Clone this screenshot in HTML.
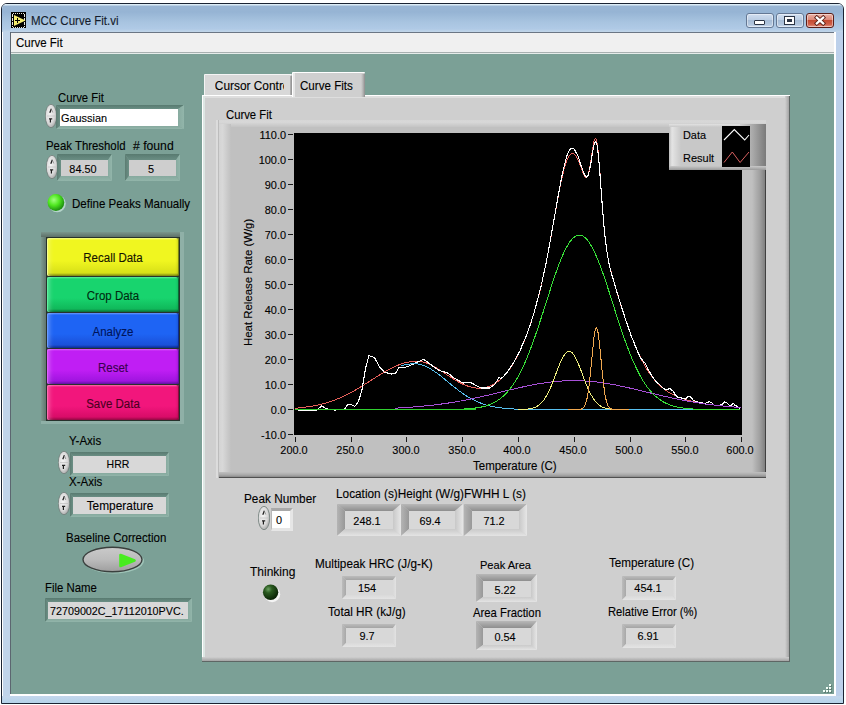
<!DOCTYPE html>
<html><head><meta charset="utf-8"><title>MCC Curve Fit.vi</title>
<style>
html,body{margin:0;padding:0;}
body{width:846px;height:705px;position:relative;overflow:hidden;background:#ffffff;font-family:"Liberation Sans", sans-serif;}
.r{position:absolute;}
.t{position:absolute;white-space:nowrap;font-family:"Liberation Sans", sans-serif;-webkit-text-stroke:0.12px currentColor;}
</style></head><body>
<div class="r" style="left:1px;top:3px;width:843px;height:701px;background:#bcd2ea;border:1px solid #1b2433;border-radius:6px 6px 0 0;box-sizing:border-box;"></div>
<div class="r" style="left:2px;top:4px;width:841px;height:699px;border-radius:5px 5px 0 0;box-shadow:inset 1px 1px 0 rgba(255,255,255,.85);"></div>
<div class="r" style="left:2px;top:4px;width:841px;height:28px;background:linear-gradient(#dcecf6 0,#dcecf6 1px,#9ab6d4 2px,#96b4d4 8px,#a8c4e0 18px,#b0cae6 25px,#c2d6e8 28px);border-radius:5px 5px 0 0;"></div>
<div class="r" style="left:2px;top:32px;width:8px;height:671px;background:#c0d4ea;border-left:1px solid #fff;box-sizing:border-box;"></div>
<div class="r" style="left:836px;top:32px;width:7px;height:671px;background:#bcd0ea;"></div>
<div class="r" style="left:2px;top:696px;width:841px;height:7px;background:linear-gradient(#c4d6ec,#b4d4ea);"></div>
<div class="r" style="left:10px;top:32px;width:825px;height:1px;background:#6b7684;"></div>
<div class="r" style="left:10px;top:32px;width:1px;height:662px;background:#5c6670;"></div>
<div class="r" style="left:834px;top:32px;width:2px;height:664px;background:#ffffff;"></div>
<div class="r" style="left:10px;top:694px;width:826px;height:2px;background:#ffffff;"></div>
<svg class="r" style="left:11px;top:12px" width="15" height="16" viewBox="0 0 15 16" shape-rendering="crispEdges">
<rect x="0" y="0" width="15" height="16" fill="#000"/>
<path d="M2 1h11M2 15h11" stroke="#e8e8e0" stroke-width="1" stroke-dasharray="1 1" fill="none"/>
<path d="M1.5 1.5v13M13.5 1.5v13" stroke="#e8e8e0" stroke-width="1" stroke-dasharray="3 1" fill="none"/>
<polygon points="3,3 14.5,8.5 3,14" fill="#f4ec70" shape-rendering="auto"/>
<path d="M4 8.5h5M6.5 6v5" stroke="#000" stroke-width="1"/>
</svg>
<div class="t" style="left:31.1px;top:14.58px;font-size:12.31px;line-height:12.31px;color:#141c2c;transform:scaleX(0.9346);transform-origin:0 0;">MCC Curve Fit.vi</div>
<div class="r" style="left:746px;top:13px;width:28px;height:15px;background:linear-gradient(#d0def0 0%,#bccee4 45%,#a6bcd6 50%,#b2c6de 80%,#c8d8ec 100%);border:1px solid #647894;border-radius:3px;box-sizing:border-box;box-shadow:inset 0 0 0 1px rgba(255,255,255,.45);"></div>
<div class="r" style="left:776px;top:13px;width:28px;height:15px;background:linear-gradient(#d0def0 0%,#bccee4 45%,#a6bcd6 50%,#b2c6de 80%,#c8d8ec 100%);border:1px solid #647894;border-radius:3px;box-sizing:border-box;box-shadow:inset 0 0 0 1px rgba(255,255,255,.45);"></div>
<div class="r" style="left:806px;top:13px;width:28px;height:15px;background:linear-gradient(#eab0a4 0%,#dc8878 45%,#c44a32 50%,#d0604a 80%,#e4988a 100%);border:1px solid #5a1d18;border-radius:3px;box-sizing:border-box;box-shadow:inset 0 0 0 1px rgba(255,255,255,.45);"></div>
<div class="r" style="left:754px;top:20px;width:11px;height:5px;background:#fff;border:1px solid #2b3444;box-sizing:border-box;border-radius:1px;"></div>
<div class="r" style="left:784px;top:16px;width:11px;height:9px;background:#fff;border:1px solid #2b3444;box-sizing:border-box;"></div>
<div class="r" style="left:787px;top:19px;width:5px;height:3px;background:#2b3444;"></div>
<svg class="r" style="left:814px;top:15px" width="12" height="11" viewBox="0 0 12 11">
<path d="M2.8 2.6L9.2 8.4M9.2 2.6L2.8 8.4" stroke="#5a2018" stroke-width="4" stroke-linecap="square"/>
<path d="M2.8 2.6L9.2 8.4M9.2 2.6L2.8 8.4" stroke="#ffffff" stroke-width="2.2" stroke-linecap="square"/>
</svg>
<div class="r" style="left:11px;top:33px;width:823px;height:19px;background:#f0f0f0;"></div>
<div class="r" style="left:11px;top:52px;width:823px;height:1px;background:#a8b0b0;"></div>
<div class="r" style="left:11px;top:53px;width:823px;height:1px;background:#e6ecea;"></div>
<div class="t" style="left:16.1px;top:36.58px;font-size:12.31px;line-height:12.31px;color:#000;transform:scaleX(0.9346);transform-origin:0 0;">Curve Fit</div>
<div class="r" style="left:11px;top:54px;width:823px;height:640px;background:#7ba096;"></div>
<div class="r" style="left:830px;top:685px;width:2px;height:2px;background:#5f7f76;"></div>
<div class="r" style="left:829px;top:684px;width:2px;height:2px;background:#f4fff8;"></div>
<div class="r" style="left:827px;top:688px;width:2px;height:2px;background:#5f7f76;"></div>
<div class="r" style="left:826px;top:687px;width:2px;height:2px;background:#f4fff8;"></div>
<div class="r" style="left:830px;top:688px;width:2px;height:2px;background:#5f7f76;"></div>
<div class="r" style="left:829px;top:687px;width:2px;height:2px;background:#f4fff8;"></div>
<div class="r" style="left:824px;top:691px;width:2px;height:2px;background:#5f7f76;"></div>
<div class="r" style="left:823px;top:690px;width:2px;height:2px;background:#f4fff8;"></div>
<div class="r" style="left:827px;top:691px;width:2px;height:2px;background:#5f7f76;"></div>
<div class="r" style="left:826px;top:690px;width:2px;height:2px;background:#f4fff8;"></div>
<div class="r" style="left:830px;top:691px;width:2px;height:2px;background:#5f7f76;"></div>
<div class="r" style="left:829px;top:690px;width:2px;height:2px;background:#f4fff8;"></div>
<div class="t" style="left:57.6px;top:91.96px;font-size:12.09px;line-height:12.09px;color:#000;transform:scaleX(0.9346);transform-origin:0 0;">Curve Fit</div>
<svg class="r" style="left:45px;top:104px" width="12" height="24" viewBox="0 0 12 24">
<defs><radialGradient id="ag45104" cx="40%" cy="40%" r="70%"><stop offset="0" stop-color="#f4f4f4"/><stop offset=".6" stop-color="#d8d8d8"/><stop offset="1" stop-color="#9a9a9a"/></radialGradient></defs>
<ellipse cx="6.0" cy="12.0" rx="5.7" ry="11.7" fill="url(#ag45104)" stroke="#6e7c78" stroke-width=".8"/>
<line x1="2" y1="12.0" x2="10" y2="12.0" stroke="#b8b8b8" stroke-width=".6"/>
<path d="M4.8 8.8 L6.4 4.8" stroke="#202020" stroke-width="1.3" fill="none"/>
<path d="M6.6 5.5 L7.8 8.5" stroke="#9a9a9a" stroke-width="1" fill="none"/>
<path d="M4.0 14.8 h3.2 M5.4 14.8 v3.6" stroke="#202020" stroke-width="1.2" fill="none"/>
</svg>
<svg class="r" style="left:56px;top:105px" width="128" height="24" viewBox="0 0 128 24">
<defs><linearGradient id="bt1" x1="0" y1="0" x2="0" y2="1"><stop offset="0" stop-color="#587a70"/><stop offset="1" stop-color="#6a8e84"/></linearGradient>
<linearGradient id="bl1" x1="0" y1="0" x2="1" y2="0"><stop offset="0" stop-color="#5c7c72"/><stop offset="1" stop-color="#6c9086"/></linearGradient>
<linearGradient id="br1" x1="0" y1="0" x2="1" y2="0"><stop offset="0" stop-color="#88aba0"/><stop offset="1" stop-color="#92b5aa"/></linearGradient>
<linearGradient id="bb1" x1="0" y1="0" x2="0" y2="1"><stop offset="0" stop-color="#86a99e"/><stop offset="1" stop-color="#92b5aa"/></linearGradient></defs>
<rect x="4" y="4" width="118" height="17" fill="#ffffff"/>
<polygon points="0,0 128,0 122,4 4,4" fill="url(#bt1)"/>
<polygon points="0,0 4,4 4,21 0,24" fill="url(#bl1)"/>
<polygon points="128,0 128,24 122,21 122,4" fill="url(#br1)"/>
<polygon points="0,24 128,24 122,21 4,21" fill="url(#bb1)"/>
</svg>
<div class="t" style="left:61.1px;top:112.23px;font-size:11.66px;line-height:11.66px;color:#000;transform:scaleX(0.9346);transform-origin:0 0;">Gaussian</div>
<div class="t" style="left:46.1px;top:139.67px;font-size:12.20px;line-height:12.20px;color:#000;transform:scaleX(0.9346);transform-origin:0 0;">Peak Threshold</div>
<div class="t" style="left:132.6px;top:138.95px;font-size:13.05px;line-height:13.05px;color:#000;transform:scaleX(0.9346);transform-origin:0 0;"># found</div>
<svg class="r" style="left:46px;top:155px" width="12" height="24" viewBox="0 0 12 24">
<defs><radialGradient id="ag46155" cx="40%" cy="40%" r="70%"><stop offset="0" stop-color="#f4f4f4"/><stop offset=".6" stop-color="#d8d8d8"/><stop offset="1" stop-color="#9a9a9a"/></radialGradient></defs>
<ellipse cx="6.0" cy="12.0" rx="5.7" ry="11.7" fill="url(#ag46155)" stroke="#6e7c78" stroke-width=".8"/>
<line x1="2" y1="12.0" x2="10" y2="12.0" stroke="#b8b8b8" stroke-width=".6"/>
<path d="M4.8 8.8 L6.4 4.8" stroke="#202020" stroke-width="1.3" fill="none"/>
<path d="M6.6 5.5 L7.8 8.5" stroke="#9a9a9a" stroke-width="1" fill="none"/>
<path d="M4.0 14.8 h3.2 M5.4 14.8 v3.6" stroke="#202020" stroke-width="1.2" fill="none"/>
</svg>
<svg class="r" style="left:57px;top:154px" width="55" height="27" viewBox="0 0 55 27">
<defs><linearGradient id="bt2" x1="0" y1="0" x2="0" y2="1"><stop offset="0" stop-color="#587a70"/><stop offset="1" stop-color="#6a8e84"/></linearGradient>
<linearGradient id="bl2" x1="0" y1="0" x2="1" y2="0"><stop offset="0" stop-color="#5c7c72"/><stop offset="1" stop-color="#6c9086"/></linearGradient>
<linearGradient id="br2" x1="0" y1="0" x2="1" y2="0"><stop offset="0" stop-color="#88aba0"/><stop offset="1" stop-color="#92b5aa"/></linearGradient>
<linearGradient id="bb2" x1="0" y1="0" x2="0" y2="1"><stop offset="0" stop-color="#86a99e"/><stop offset="1" stop-color="#92b5aa"/></linearGradient></defs>
<rect x="4" y="6" width="47" height="16" fill="#cecece"/>
<polygon points="0,0 55,0 51,6 4,6" fill="url(#bt2)"/>
<polygon points="0,0 4,6 4,22 0,27" fill="url(#bl2)"/>
<polygon points="55,0 55,27 51,22 51,6" fill="url(#br2)"/>
<polygon points="0,27 55,27 51,22 4,22" fill="url(#bb2)"/>
</svg>
<div class="t" style="left:-17.2px;width:200px;text-align:center;top:163.23px;font-size:11.66px;line-height:11.66px;color:#000;transform:scaleX(0.9346);transform-origin:50% 0;">84.50</div>
<svg class="r" style="left:125px;top:154px" width="55" height="27" viewBox="0 0 55 27">
<defs><linearGradient id="bt3" x1="0" y1="0" x2="0" y2="1"><stop offset="0" stop-color="#587a70"/><stop offset="1" stop-color="#6a8e84"/></linearGradient>
<linearGradient id="bl3" x1="0" y1="0" x2="1" y2="0"><stop offset="0" stop-color="#5c7c72"/><stop offset="1" stop-color="#6c9086"/></linearGradient>
<linearGradient id="br3" x1="0" y1="0" x2="1" y2="0"><stop offset="0" stop-color="#88aba0"/><stop offset="1" stop-color="#92b5aa"/></linearGradient>
<linearGradient id="bb3" x1="0" y1="0" x2="0" y2="1"><stop offset="0" stop-color="#86a99e"/><stop offset="1" stop-color="#92b5aa"/></linearGradient></defs>
<rect x="4" y="6" width="47" height="16" fill="#cecece"/>
<polygon points="0,0 55,0 51,6 4,6" fill="url(#bt3)"/>
<polygon points="0,0 4,6 4,22 0,27" fill="url(#bl3)"/>
<polygon points="55,0 55,27 51,22 51,6" fill="url(#br3)"/>
<polygon points="0,27 55,27 51,22 4,22" fill="url(#bb3)"/>
</svg>
<div class="t" style="left:51.3px;width:200px;text-align:center;top:163.23px;font-size:11.66px;line-height:11.66px;color:#000;transform:scaleX(0.9346);transform-origin:50% 0;">5</div>
<svg class="r" style="left:45px;top:191px" width="24" height="24" viewBox="0 0 24 24">
<defs><radialGradient id="led1" cx="38%" cy="35%" r="65%"><stop offset="0" stop-color="#a0ff80"/><stop offset=".5" stop-color="#50e820"/><stop offset="1" stop-color="#1e9010"/></radialGradient></defs>
<circle cx="12.2" cy="12.6" r="8.6" fill="#b4d4ca"/>
<circle cx="10.9" cy="11.5" r="8.4" fill="url(#led1)"/>
</svg>
<div class="t" style="left:72.0px;top:198.04px;font-size:12.36px;line-height:12.36px;color:#000;transform:scaleX(0.9346);transform-origin:0 0;">Define Peaks Manually</div>
<div class="r" style="left:41px;top:232px;width:143px;height:192px;background:#8fb0a7;"></div>
<div class="r" style="left:41px;top:232px;width:139px;height:5px;background:linear-gradient(#7a968c,#5e7068);"></div>
<div class="r" style="left:41px;top:237px;width:5px;height:184px;background:linear-gradient(to right,#7c9a90,#62766e);"></div>
<div class="r" style="left:46px;top:237px;width:134px;height:184px;background:#27322c;"></div>
<div class="r" style="left:47px;top:238px;width:132px;height:38px;background:linear-gradient(#f8ff90 0,#f0f620 2px,#f0f620 60%,#d8e018 calc(100% - 3px),#7a8410 100%);border-radius:2px;box-shadow:inset 1px 0 0 #f8ff90, inset 6px 0 5px -4px rgba(255,255,255,.35), inset -1px 0 0 #7a8410, inset -3px 0 3px -2px rgba(0,0,0,.25);"></div>
<div class="t" style="left:13.0px;width:200px;text-align:center;top:252.48px;font-size:12.31px;line-height:12.31px;color:#141400;transform:scaleX(0.9346);transform-origin:50% 0;">Recall Data</div>
<div class="r" style="left:47px;top:277px;width:132px;height:35px;background:linear-gradient(#60f0a0 0,#18d46e 2px,#18d46e 60%,#10b85a calc(100% - 3px),#0a6a34 100%);border-radius:2px;box-shadow:inset 1px 0 0 #60f0a0, inset 6px 0 5px -4px rgba(255,255,255,.35), inset -1px 0 0 #0a6a34, inset -3px 0 3px -2px rgba(0,0,0,.25);"></div>
<div class="t" style="left:13.0px;width:200px;text-align:center;top:289.98px;font-size:12.31px;line-height:12.31px;color:#002a10;transform:scaleX(0.9346);transform-origin:50% 0;">Crop Data</div>
<div class="r" style="left:47px;top:313px;width:132px;height:35px;background:linear-gradient(#6a9cff 0,#1e64f4 2px,#1e64f4 60%,#1a50d8 calc(100% - 3px),#0c2a90 100%);border-radius:2px;box-shadow:inset 1px 0 0 #6a9cff, inset 6px 0 5px -4px rgba(255,255,255,.35), inset -1px 0 0 #0c2a90, inset -3px 0 3px -2px rgba(0,0,0,.25);"></div>
<div class="t" style="left:13.0px;width:200px;text-align:center;top:325.98px;font-size:12.31px;line-height:12.31px;color:#00145a;transform:scaleX(0.9346);transform-origin:50% 0;">Analyze</div>
<div class="r" style="left:47px;top:349px;width:132px;height:35px;background:linear-gradient(#e060ff 0,#c01ef4 2px,#c01ef4 60%,#a014e0 calc(100% - 3px),#6010a0 100%);border-radius:2px;box-shadow:inset 1px 0 0 #e060ff, inset 6px 0 5px -4px rgba(255,255,255,.35), inset -1px 0 0 #6010a0, inset -3px 0 3px -2px rgba(0,0,0,.25);"></div>
<div class="t" style="left:13.0px;width:200px;text-align:center;top:361.98px;font-size:12.31px;line-height:12.31px;color:#3a0050;transform:scaleX(0.9346);transform-origin:50% 0;">Reset</div>
<div class="r" style="left:47px;top:385px;width:132px;height:35px;background:linear-gradient(#ff6cb0 0,#f2167c 2px,#f2167c 60%,#d80c68 calc(100% - 3px),#900840 100%);border-radius:2px;box-shadow:inset 1px 0 0 #ff6cb0, inset 6px 0 5px -4px rgba(255,255,255,.35), inset -1px 0 0 #900840, inset -3px 0 3px -2px rgba(0,0,0,.25);"></div>
<div class="t" style="left:13.0px;width:200px;text-align:center;top:397.98px;font-size:12.31px;line-height:12.31px;color:#4a0020;transform:scaleX(0.9346);transform-origin:50% 0;">Save Data</div>
<div class="t" style="left:68.6px;top:435.08px;font-size:12.31px;line-height:12.31px;color:#000;transform:scaleX(0.9346);transform-origin:0 0;">Y-Axis</div>
<svg class="r" style="left:58px;top:451px" width="12" height="23" viewBox="0 0 12 23">
<defs><radialGradient id="ag58451" cx="40%" cy="40%" r="70%"><stop offset="0" stop-color="#f4f4f4"/><stop offset=".6" stop-color="#d8d8d8"/><stop offset="1" stop-color="#9a9a9a"/></radialGradient></defs>
<ellipse cx="6.0" cy="11.5" rx="5.7" ry="11.2" fill="url(#ag58451)" stroke="#6e7c78" stroke-width=".8"/>
<line x1="2" y1="11.5" x2="10" y2="11.5" stroke="#b8b8b8" stroke-width=".6"/>
<path d="M4.8 8.3 L6.4 4.3" stroke="#202020" stroke-width="1.3" fill="none"/>
<path d="M6.6 5.0 L7.8 8.0" stroke="#9a9a9a" stroke-width="1" fill="none"/>
<path d="M4.0 14.3 h3.2 M5.4 14.3 v3.6" stroke="#202020" stroke-width="1.2" fill="none"/>
</svg>
<svg class="r" style="left:70px;top:452px" width="99" height="24" viewBox="0 0 99 24">
<defs><linearGradient id="bt4" x1="0" y1="0" x2="0" y2="1"><stop offset="0" stop-color="#587a70"/><stop offset="1" stop-color="#6a8e84"/></linearGradient>
<linearGradient id="bl4" x1="0" y1="0" x2="1" y2="0"><stop offset="0" stop-color="#5c7c72"/><stop offset="1" stop-color="#6c9086"/></linearGradient>
<linearGradient id="br4" x1="0" y1="0" x2="1" y2="0"><stop offset="0" stop-color="#88aba0"/><stop offset="1" stop-color="#92b5aa"/></linearGradient>
<linearGradient id="bb4" x1="0" y1="0" x2="0" y2="1"><stop offset="0" stop-color="#86a99e"/><stop offset="1" stop-color="#92b5aa"/></linearGradient></defs>
<rect x="3" y="4" width="93" height="17" fill="#d8d8d8"/>
<polygon points="0,0 99,0 96,4 3,4" fill="url(#bt4)"/>
<polygon points="0,0 3,4 3,21 0,24" fill="url(#bl4)"/>
<polygon points="99,0 99,24 96,21 96,4" fill="url(#br4)"/>
<polygon points="0,24 99,24 96,21 3,21" fill="url(#bb4)"/>
</svg>
<div class="t" style="left:18.3px;width:200px;text-align:center;top:459.39px;font-size:11.24px;line-height:11.24px;color:#000;transform:scaleX(0.9346);transform-origin:50% 0;">HRR</div>
<div class="t" style="left:68.6px;top:475.68px;font-size:12.31px;line-height:12.31px;color:#000;transform:scaleX(0.9346);transform-origin:0 0;">X-Axis</div>
<svg class="r" style="left:58px;top:492px" width="12" height="23" viewBox="0 0 12 23">
<defs><radialGradient id="ag58492" cx="40%" cy="40%" r="70%"><stop offset="0" stop-color="#f4f4f4"/><stop offset=".6" stop-color="#d8d8d8"/><stop offset="1" stop-color="#9a9a9a"/></radialGradient></defs>
<ellipse cx="6.0" cy="11.5" rx="5.7" ry="11.2" fill="url(#ag58492)" stroke="#6e7c78" stroke-width=".8"/>
<line x1="2" y1="11.5" x2="10" y2="11.5" stroke="#b8b8b8" stroke-width=".6"/>
<path d="M4.8 8.3 L6.4 4.3" stroke="#202020" stroke-width="1.3" fill="none"/>
<path d="M6.6 5.0 L7.8 8.0" stroke="#9a9a9a" stroke-width="1" fill="none"/>
<path d="M4.0 14.3 h3.2 M5.4 14.3 v3.6" stroke="#202020" stroke-width="1.2" fill="none"/>
</svg>
<svg class="r" style="left:70px;top:493px" width="99" height="24" viewBox="0 0 99 24">
<defs><linearGradient id="bt5" x1="0" y1="0" x2="0" y2="1"><stop offset="0" stop-color="#587a70"/><stop offset="1" stop-color="#6a8e84"/></linearGradient>
<linearGradient id="bl5" x1="0" y1="0" x2="1" y2="0"><stop offset="0" stop-color="#5c7c72"/><stop offset="1" stop-color="#6c9086"/></linearGradient>
<linearGradient id="br5" x1="0" y1="0" x2="1" y2="0"><stop offset="0" stop-color="#88aba0"/><stop offset="1" stop-color="#92b5aa"/></linearGradient>
<linearGradient id="bb5" x1="0" y1="0" x2="0" y2="1"><stop offset="0" stop-color="#86a99e"/><stop offset="1" stop-color="#92b5aa"/></linearGradient></defs>
<rect x="3" y="4" width="93" height="17" fill="#d8d8d8"/>
<polygon points="0,0 99,0 96,4 3,4" fill="url(#bt5)"/>
<polygon points="0,0 3,4 3,21 0,24" fill="url(#bl5)"/>
<polygon points="99,0 99,24 96,21 96,4" fill="url(#br5)"/>
<polygon points="0,24 99,24 96,21 3,21" fill="url(#bb5)"/>
</svg>
<div class="t" style="left:19.5px;width:200px;text-align:center;top:499.62px;font-size:12.73px;line-height:12.73px;color:#000;transform:scaleX(0.9346);transform-origin:50% 0;">Temperature</div>
<div class="t" style="left:66.1px;top:532.08px;font-size:12.31px;line-height:12.31px;color:#000;transform:scaleX(0.9346);transform-origin:0 0;">Baseline Correction</div>
<svg class="r" style="left:81px;top:545px" width="64" height="30" viewBox="0 0 64 30">
<defs><linearGradient id="bcg" x1="0" y1="0" x2="0" y2="1"><stop offset="0" stop-color="#cacaca"/><stop offset=".5" stop-color="#bcbcbc"/><stop offset="1" stop-color="#9e9e9e"/></linearGradient></defs>
<ellipse cx="33" cy="16" rx="30" ry="12.5" fill="#9fc4b8"/>
<ellipse cx="31.5" cy="14.5" rx="29.5" ry="12.3" fill="url(#bcg)" stroke="#3a403e" stroke-width="1.4"/>
<polygon points="39.5,10 53.5,15.5 39.5,21" fill="#48ec20" stroke="#48ec20" stroke-width="2.6" stroke-linejoin="round"/>
</svg>
<div class="t" style="left:45.3px;top:582.27px;font-size:12.20px;line-height:12.20px;color:#000;transform:scaleX(0.9346);transform-origin:0 0;">File Name</div>
<svg class="r" style="left:45px;top:598px" width="147" height="24" viewBox="0 0 147 24">
<defs><linearGradient id="bt6" x1="0" y1="0" x2="0" y2="1"><stop offset="0" stop-color="#587a70"/><stop offset="1" stop-color="#6a8e84"/></linearGradient>
<linearGradient id="bl6" x1="0" y1="0" x2="1" y2="0"><stop offset="0" stop-color="#5c7c72"/><stop offset="1" stop-color="#6c9086"/></linearGradient>
<linearGradient id="br6" x1="0" y1="0" x2="1" y2="0"><stop offset="0" stop-color="#88aba0"/><stop offset="1" stop-color="#92b5aa"/></linearGradient>
<linearGradient id="bb6" x1="0" y1="0" x2="0" y2="1"><stop offset="0" stop-color="#86a99e"/><stop offset="1" stop-color="#92b5aa"/></linearGradient></defs>
<rect x="3" y="4" width="140" height="17" fill="#d8d8d8"/>
<polygon points="0,0 147,0 143,4 3,4" fill="url(#bt6)"/>
<polygon points="0,0 3,4 3,21 0,24" fill="url(#bl6)"/>
<polygon points="147,0 147,24 143,21 143,4" fill="url(#br6)"/>
<polygon points="0,24 147,24 143,21 3,21" fill="url(#bb6)"/>
</svg>
<div class="t" style="left:50.0px;top:605.56px;font-size:11.50px;line-height:11.50px;color:#000;transform:scaleX(0.9346);transform-origin:0 0;">72709002C_17112010PVC.</div>
<div class="r" style="left:202px;top:95px;width:588px;height:567px;background:#cfcfcf;"></div>
<div class="r" style="left:202px;top:95px;width:588px;height:1px;background:#ffffff;"></div>
<div class="r" style="left:202px;top:96px;width:588px;height:2px;background:#dedede;"></div>
<div class="r" style="left:202px;top:95px;width:1px;height:567px;background:#ffffff;"></div>
<div class="r" style="left:203px;top:96px;width:2px;height:566px;background:#dde6e3;"></div>
<div class="r" style="left:785px;top:96px;width:4px;height:566px;background:linear-gradient(to right,#cfcfcf,#a4a4a4);"></div>
<div class="r" style="left:202px;top:657px;width:587px;height:4px;background:linear-gradient(#cfcfcf,#a4a4a4);"></div>
<div class="r" style="left:789px;top:96px;width:1px;height:566px;background:#5e6664;"></div>
<div class="r" style="left:202px;top:661px;width:588px;height:1px;background:#5e6664;"></div>
<div class="r" style="left:204px;top:74px;width:88px;height:21px;background:#d8d8d8;border-radius:3px 3px 0 0;"></div>
<div class="r" style="left:204px;top:74px;width:88px;height:1px;background:#f4f4f4;border-radius:3px 3px 0 0;"></div>
<div class="r" style="left:204px;top:75px;width:1px;height:20px;background:#f4f4f4;"></div>
<div class="r" style="left:290px;top:76px;width:2px;height:19px;background:linear-gradient(to right,#b8b8b8,#8c8c8c);"></div>
<div class="t" style="left:214.8px;top:77.5px;width:69.2px;height:16px;overflow:hidden;font-size:11.9px;line-height:16px;white-space:nowrap">Cursor Controls</div>
<div class="r" style="left:292px;top:72px;width:73px;height:25px;background:#cfcfcf;border-radius:3px 3px 0 0;"></div>
<div class="r" style="left:292px;top:72px;width:73px;height:1px;background:#ffffff;border-radius:3px 3px 0 0;"></div>
<div class="r" style="left:292px;top:73px;width:1px;height:24px;background:#ffffff;"></div>
<div class="r" style="left:293px;top:73px;width:2px;height:24px;background:#e6e6e6;"></div>
<div class="r" style="left:361px;top:74px;width:4px;height:23px;background:linear-gradient(to right,#cfcfcf,#b4b4b4 50%,#8c8c8c);"></div>
<div class="t" style="left:299.8px;top:79.99px;font-size:12.41px;line-height:12.41px;color:#000;transform:scaleX(0.9346);transform-origin:0 0;">Curve Fits</div>
<div class="t" style="left:225.6px;top:108.56px;font-size:12.09px;line-height:12.09px;color:#000;transform:scaleX(0.9346);transform-origin:0 0;">Curve Fit</div>
<div class="r" style="left:216px;top:120px;width:550px;height:358px;background:#c0c0c0;"></div>
<div class="r" style="left:216px;top:120px;width:550px;height:7px;background:linear-gradient(#d6d6d6,#d8d8d8 30%,#c4c4c4);"></div>
<div class="r" style="left:216px;top:120px;width:2px;height:358px;background:#dcdcdc;"></div>
<div class="r" style="left:218px;top:120px;width:1px;height:358px;background:#bcbcbc;"></div>
<div class="r" style="left:219px;top:124px;width:12px;height:354px;background:linear-gradient(to right,#d4d4d4,#d8d8d8 30%,#c0c0c0);"></div>
<div class="r" style="left:752px;top:124px;width:14px;height:354px;background:linear-gradient(to right,#c0c0c0,#a0a0a0 55%,#7a7a7a);"></div>
<div class="r" style="left:765px;top:124px;width:1px;height:354px;background:#404040;"></div>
<div class="r" style="left:219px;top:472px;width:547px;height:6px;background:linear-gradient(#c0c0c0,#a8a8a8 50%,#7a7a7a);"></div>
<div class="r" style="left:219px;top:477px;width:547px;height:1px;background:#505050;"></div>
<div class="r" style="left:294px;top:133px;width:448px;height:302px;background:#000;"></div>
<div class="r" style="left:288px;top:134px;width:5px;height:1px;background:#1a1a1a;"></div>
<div class="t" style="left:186px;width:100px;text-align:right;top:128.8px;font-size:11.7px;line-height:11px;transform:scaleX(0.935);transform-origin:100% 0">110.0</div>
<div class="r" style="left:288px;top:159px;width:5px;height:1px;background:#1a1a1a;"></div>
<div class="t" style="left:186px;width:100px;text-align:right;top:153.8px;font-size:11.7px;line-height:11px;transform:scaleX(0.935);transform-origin:100% 0">100.0</div>
<div class="r" style="left:288px;top:184px;width:5px;height:1px;background:#1a1a1a;"></div>
<div class="t" style="left:186px;width:100px;text-align:right;top:178.8px;font-size:11.7px;line-height:11px;transform:scaleX(0.935);transform-origin:100% 0">90.0</div>
<div class="r" style="left:288px;top:209px;width:5px;height:1px;background:#1a1a1a;"></div>
<div class="t" style="left:186px;width:100px;text-align:right;top:203.8px;font-size:11.7px;line-height:11px;transform:scaleX(0.935);transform-origin:100% 0">80.0</div>
<div class="r" style="left:288px;top:234px;width:5px;height:1px;background:#1a1a1a;"></div>
<div class="t" style="left:186px;width:100px;text-align:right;top:228.8px;font-size:11.7px;line-height:11px;transform:scaleX(0.935);transform-origin:100% 0">70.0</div>
<div class="r" style="left:288px;top:259px;width:5px;height:1px;background:#1a1a1a;"></div>
<div class="t" style="left:186px;width:100px;text-align:right;top:253.8px;font-size:11.7px;line-height:11px;transform:scaleX(0.935);transform-origin:100% 0">60.0</div>
<div class="r" style="left:288px;top:284px;width:5px;height:1px;background:#1a1a1a;"></div>
<div class="t" style="left:186px;width:100px;text-align:right;top:278.8px;font-size:11.7px;line-height:11px;transform:scaleX(0.935);transform-origin:100% 0">50.0</div>
<div class="r" style="left:288px;top:309px;width:5px;height:1px;background:#1a1a1a;"></div>
<div class="t" style="left:186px;width:100px;text-align:right;top:303.8px;font-size:11.7px;line-height:11px;transform:scaleX(0.935);transform-origin:100% 0">40.0</div>
<div class="r" style="left:288px;top:334px;width:5px;height:1px;background:#1a1a1a;"></div>
<div class="t" style="left:186px;width:100px;text-align:right;top:328.8px;font-size:11.7px;line-height:11px;transform:scaleX(0.935);transform-origin:100% 0">30.0</div>
<div class="r" style="left:288px;top:359px;width:5px;height:1px;background:#1a1a1a;"></div>
<div class="t" style="left:186px;width:100px;text-align:right;top:353.8px;font-size:11.7px;line-height:11px;transform:scaleX(0.935);transform-origin:100% 0">20.0</div>
<div class="r" style="left:288px;top:384px;width:5px;height:1px;background:#1a1a1a;"></div>
<div class="t" style="left:186px;width:100px;text-align:right;top:378.8px;font-size:11.7px;line-height:11px;transform:scaleX(0.935);transform-origin:100% 0">10.0</div>
<div class="r" style="left:288px;top:409px;width:5px;height:1px;background:#1a1a1a;"></div>
<div class="t" style="left:186px;width:100px;text-align:right;top:403.8px;font-size:11.7px;line-height:11px;transform:scaleX(0.935);transform-origin:100% 0">0.0</div>
<div class="r" style="left:288px;top:434px;width:5px;height:1px;background:#1a1a1a;"></div>
<div class="t" style="left:186px;width:100px;text-align:right;top:428.8px;font-size:11.7px;line-height:11px;transform:scaleX(0.935);transform-origin:100% 0">-10.0</div>
<div class="r" style="left:295px;top:437px;width:1px;height:5px;background:#1a1a1a;"></div>
<div class="t" style="left:244.3px;width:100px;text-align:center;top:444.0px;font-size:11.7px;line-height:11px;transform:scaleX(0.935);transform-origin:50% 0">200.0</div>
<div class="r" style="left:351px;top:437px;width:1px;height:5px;background:#1a1a1a;"></div>
<div class="t" style="left:300.1px;width:100px;text-align:center;top:444.0px;font-size:11.7px;line-height:11px;transform:scaleX(0.935);transform-origin:50% 0">250.0</div>
<div class="r" style="left:406px;top:437px;width:1px;height:5px;background:#1a1a1a;"></div>
<div class="t" style="left:355.8px;width:100px;text-align:center;top:444.0px;font-size:11.7px;line-height:11px;transform:scaleX(0.935);transform-origin:50% 0">300.0</div>
<div class="r" style="left:462px;top:437px;width:1px;height:5px;background:#1a1a1a;"></div>
<div class="t" style="left:411.6px;width:100px;text-align:center;top:444.0px;font-size:11.7px;line-height:11px;transform:scaleX(0.935);transform-origin:50% 0">350.0</div>
<div class="r" style="left:518px;top:437px;width:1px;height:5px;background:#1a1a1a;"></div>
<div class="t" style="left:467.3px;width:100px;text-align:center;top:444.0px;font-size:11.7px;line-height:11px;transform:scaleX(0.935);transform-origin:50% 0">400.0</div>
<div class="r" style="left:574px;top:437px;width:1px;height:5px;background:#1a1a1a;"></div>
<div class="t" style="left:523.0px;width:100px;text-align:center;top:444.0px;font-size:11.7px;line-height:11px;transform:scaleX(0.935);transform-origin:50% 0">450.0</div>
<div class="r" style="left:630px;top:437px;width:1px;height:5px;background:#1a1a1a;"></div>
<div class="t" style="left:578.8px;width:100px;text-align:center;top:444.0px;font-size:11.7px;line-height:11px;transform:scaleX(0.935);transform-origin:50% 0">500.0</div>
<div class="r" style="left:685px;top:437px;width:1px;height:5px;background:#1a1a1a;"></div>
<div class="t" style="left:634.5px;width:100px;text-align:center;top:444.0px;font-size:11.7px;line-height:11px;transform:scaleX(0.935);transform-origin:50% 0">550.0</div>
<div class="r" style="left:741px;top:437px;width:1px;height:5px;background:#1a1a1a;"></div>
<div class="t" style="left:690.3px;width:100px;text-align:center;top:444.0px;font-size:11.7px;line-height:11px;transform:scaleX(0.935);transform-origin:50% 0">600.0</div>
<div class="t" style="left:473.1px;top:460.08px;font-size:12.31px;line-height:12.31px;color:#000;transform:scaleX(0.9346);transform-origin:0 0;">Temperature (C)</div>
<div class="t" style="left:252.5px;top:345.5px;transform-origin:0 0;transform:rotate(-90deg);font-size:11.4px;line-height:11.4px;white-space:nowrap;width:200px;"><span style="position:relative;top:-9.6px">Heat Release Rate (W/g)</span></div>
<svg class="r" style="left:0;top:0;overflow:hidden" width="846" height="705"><defs><clipPath id="pclip"><rect x="295" y="133" width="447" height="302"/></clipPath></defs><g clip-path="url(#pclip)"><polyline points="295.0,408.2 295.7,408.2 296.3,408.1 297.0,408.0 297.7,408.0 298.3,407.9 299.0,407.9 299.7,407.8 300.4,407.7 301.0,407.7 301.7,407.6 302.4,407.5 303.0,407.4 303.7,407.4 304.4,407.3 305.0,407.2 305.7,407.1 306.4,407.0 307.0,406.9 307.7,406.8 308.4,406.7 309.0,406.6 309.7,406.5 310.4,406.4 311.1,406.3 311.7,406.2 312.4,406.1 313.1,406.0 313.7,405.9 314.4,405.7 315.1,405.6 315.7,405.5 316.4,405.3 317.1,405.2 317.7,405.1 318.4,404.9 319.1,404.8 319.8,404.6 320.4,404.4 321.1,404.3 321.8,404.1 322.4,404.0 323.1,403.8 323.8,403.6 324.4,403.4 325.1,403.2 325.8,403.0 326.4,402.8 327.1,402.6 327.8,402.4 328.4,402.2 329.1,402.0 329.8,401.8 330.5,401.6 331.1,401.4 331.8,401.1 332.5,400.9 333.1,400.7 333.8,400.4 334.5,400.2 335.1,399.9 335.8,399.7 336.5,399.4 337.1,399.1 337.8,398.8 338.5,398.6 339.2,398.3 339.8,398.0 340.5,397.7 341.2,397.4 341.8,397.1 342.5,396.8 343.2,396.5 343.8,396.2 344.5,395.9 345.2,395.5 345.8,395.2 346.5,394.9 347.2,394.5 347.9,394.2 348.5,393.9 349.2,393.5 349.9,393.2 350.5,392.8 351.2,392.4 351.9,392.1 352.5,391.7 353.2,391.3 353.9,391.0 354.5,390.6 355.2,390.2 355.9,389.8 356.5,389.4 357.2,389.0 357.9,388.6 358.6,388.2 359.2,387.8 359.9,387.4 360.6,387.0 361.2,386.6 361.9,386.2 362.6,385.8 363.2,385.3 363.9,384.9 364.6,384.5 365.2,384.1 365.9,383.6 366.6,383.2 367.3,382.8 367.9,382.4 368.6,381.9 369.3,381.5 369.9,381.1 370.6,380.6 371.3,380.2 371.9,379.8 372.6,379.4 373.3,378.9 373.9,378.5 374.6,378.1 375.3,377.6 375.9,377.2 376.6,376.8 377.3,376.4 378.0,375.9 378.6,375.5 379.3,375.1 380.0,374.7 380.6,374.3 381.3,373.9 382.0,373.5 382.6,373.1 383.3,372.7 384.0,372.3 384.6,371.9 385.3,371.5 386.0,371.1 386.7,370.7 387.3,370.4 388.0,370.0 388.7,369.6 389.3,369.3 390.0,368.9 390.7,368.6 391.3,368.2 392.0,367.9 392.7,367.6 393.3,367.3 394.0,366.9 394.7,366.6 395.4,366.3 396.0,366.0 396.7,365.7 397.4,365.5 398.0,365.2 398.7,364.9 399.4,364.7 400.0,364.4 400.7,364.2 401.4,363.9 402.0,363.7 402.7,363.5 403.4,363.3 404.0,363.1 404.7,362.9 405.4,362.7 406.1,362.6 406.7,362.4 407.4,362.2 408.1,362.1 408.7,362.0 409.4,361.8 410.1,361.7 410.7,361.6 411.4,361.5 412.1,361.4 412.7,361.3 413.4,361.3 414.1,361.2 414.8,361.2 415.4,361.1 416.1,361.1 416.8,361.1 417.4,361.1 418.1,361.2 418.8,361.2 419.4,361.3 420.1,361.4 420.8,361.5 421.4,361.6 422.1,361.8 422.8,361.9 423.4,362.1 424.1,362.3 424.8,362.5 425.5,362.7 426.1,362.9 426.8,363.1 427.5,363.4 428.1,363.7 428.8,364.0 429.5,364.2 430.1,364.6 430.8,364.9 431.5,365.2 432.1,365.5 432.8,365.9 433.5,366.2 434.2,366.6 434.8,367.0 435.5,367.4 436.2,367.8 436.8,368.2 437.5,368.6 438.2,369.0 438.8,369.4 439.5,369.8 440.2,370.3 440.8,370.7 441.5,371.1 442.2,371.6 442.8,372.0 443.5,372.5 444.2,372.9 444.9,373.4 445.5,373.8 446.2,374.3 446.9,374.7 447.5,375.2 448.2,375.6 448.9,376.0 449.5,376.5 450.2,376.9 450.9,377.4 451.5,377.8 452.2,378.2 452.9,378.6 453.6,379.1 454.2,379.5 454.9,379.9 455.6,380.3 456.2,380.7 456.9,381.1 457.6,381.5 458.2,381.8 458.9,382.2 459.6,382.5 460.2,382.9 460.9,383.2 461.6,383.6 462.3,383.9 462.9,384.2 463.6,384.5 464.3,384.8 464.9,385.1 465.6,385.3 466.3,385.6 466.9,385.8 467.6,386.1 468.3,386.3 468.9,386.5 469.6,386.7 470.3,386.9 470.9,387.1 471.6,387.2 472.3,387.4 473.0,387.5 473.6,387.7 474.3,387.8 475.0,387.9 475.6,388.0 476.3,388.0 477.0,388.1 477.6,388.1 478.3,388.1 479.0,388.2 479.6,388.2 480.3,388.1 481.0,388.1 481.7,388.1 482.3,388.0 483.0,387.9 483.7,387.8 484.3,387.7 485.0,387.6 485.7,387.4 486.3,387.3 487.0,387.1 487.7,386.9 488.3,386.7 489.0,386.5 489.7,386.2 490.3,386.0 491.0,385.7 491.7,385.4 492.4,385.0 493.0,384.7 493.7,384.3 494.4,384.0 495.0,383.6 495.7,383.1 496.4,382.7 497.0,382.2 497.7,381.7 498.4,381.2 499.0,380.7 499.7,380.1 500.4,379.6 501.1,379.0 501.7,378.3 502.4,377.7 503.1,377.0 503.7,376.3 504.4,375.6 505.1,374.8 505.7,374.1 506.4,373.2 507.1,372.4 507.7,371.6 508.4,370.7 509.1,369.8 509.7,368.8 510.4,367.8 511.1,366.8 511.8,365.8 512.4,364.8 513.1,363.7 513.8,362.6 514.4,361.4 515.1,360.2 515.8,359.0 516.4,357.8 517.1,356.5 517.8,355.2 518.4,353.9 519.1,352.5 519.8,351.1 520.5,349.6 521.1,348.2 521.8,346.7 522.5,345.1 523.1,343.6 523.8,342.0 524.5,340.3 525.1,338.6 525.8,336.9 526.5,335.2 527.1,333.4 527.8,331.6 528.5,329.7 529.2,327.8 529.8,325.9 530.5,323.9 531.2,321.8 531.8,319.8 532.5,317.7 533.2,315.5 533.8,313.3 534.5,311.0 535.2,308.7 535.8,306.4 536.5,304.0 537.2,301.5 537.8,299.0 538.5,296.4 539.2,293.8 539.9,291.1 540.5,288.3 541.2,285.5 541.9,282.6 542.5,279.6 543.2,276.6 543.9,273.5 544.5,270.4 545.2,267.2 545.9,263.9 546.5,260.5 547.2,257.1 547.9,253.7 548.6,250.1 549.2,246.5 549.9,242.9 550.6,239.2 551.2,235.5 551.9,231.8 552.6,228.0 553.2,224.2 553.9,220.4 554.6,216.7 555.2,212.9 555.9,209.1 556.6,205.4 557.2,201.7 557.9,198.1 558.6,194.5 559.3,191.0 559.9,187.6 560.6,184.3 561.3,181.1 561.9,178.1 562.6,175.2 563.3,172.4 563.9,169.8 564.6,167.4 565.3,165.1 565.9,163.0 566.6,161.1 567.3,159.5 568.0,158.0 568.6,156.7 569.3,155.6 570.0,154.8 570.6,154.1 571.3,153.7 572.0,153.5 572.6,153.5 573.3,153.6 574.0,154.0 574.6,154.6 575.3,155.3 576.0,156.2 576.6,157.3 577.3,158.5 578.0,159.9 578.7,161.4 579.3,163.0 580.0,164.7 580.7,166.4 581.3,168.2 582.0,170.0 582.7,171.7 583.3,173.4 584.0,174.8 584.7,176.0 585.3,176.9 586.0,177.3 586.7,177.1 587.4,176.4 588.0,175.0 588.7,172.8 589.4,169.9 590.0,166.4 590.7,162.2 591.4,157.8 592.0,153.1 592.7,148.6 593.4,144.6 594.0,141.4 594.7,139.2 595.4,138.4 596.1,139.1 596.7,141.5 597.4,145.5 598.1,151.0 598.7,157.9 599.4,165.9 600.1,174.6 600.7,183.8 601.4,193.2 602.1,202.4 602.7,211.3 603.4,219.6 604.1,227.2 604.7,234.1 605.4,240.3 606.1,245.7 606.8,250.5 607.4,254.8 608.1,258.6 608.8,261.9 609.4,265.0 610.1,267.9 610.8,270.6 611.4,273.1 612.1,275.6 612.8,278.0 613.4,280.3 614.1,282.6 614.8,284.9 615.5,287.2 616.1,289.4 616.8,291.7 617.5,293.9 618.1,296.1 618.8,298.3 619.5,300.5 620.1,302.7 620.8,304.8 621.5,307.0 622.1,309.1 622.8,311.2 623.5,313.3 624.1,315.3 624.8,317.4 625.5,319.4 626.2,321.4 626.8,323.3 627.5,325.3 628.2,327.2 628.8,329.1 629.5,331.0 630.2,332.8 630.8,334.6 631.5,336.4 632.2,338.2 632.8,339.9 633.5,341.6 634.2,343.2 634.9,344.9 635.5,346.5 636.2,348.1 636.9,349.6 637.5,351.1 638.2,352.6 638.9,354.1 639.5,355.5 640.2,356.9 640.9,358.2 641.5,359.6 642.2,360.9 642.9,362.1 643.5,363.4 644.2,364.6 644.9,365.8 645.6,366.9 646.2,368.1 646.9,369.2 647.6,370.2 648.2,371.3 648.9,372.3 649.6,373.3 650.2,374.2 650.9,375.2 651.6,376.1 652.2,377.0 652.9,377.8 653.6,378.7 654.3,379.5 654.9,380.3 655.6,381.0 656.3,381.8 656.9,382.5 657.6,383.2 658.3,383.9 658.9,384.6 659.6,385.2 660.3,385.8 660.9,386.4 661.6,387.0 662.3,387.6 663.0,388.1 663.6,388.7 664.3,389.2 665.0,389.7 665.6,390.2 666.3,390.6 667.0,391.1 667.6,391.5 668.3,392.0 669.0,392.4 669.6,392.8 670.3,393.2 671.0,393.6 671.6,393.9 672.3,394.3 673.0,394.6 673.7,395.0 674.3,395.3 675.0,395.6 675.7,395.9 676.3,396.2 677.0,396.5 677.7,396.8 678.3,397.1 679.0,397.3 679.7,397.6 680.3,397.8 681.0,398.1 681.7,398.3 682.4,398.5 683.0,398.8 683.7,399.0 684.4,399.2 685.0,399.4 685.7,399.6 686.4,399.8 687.0,400.0 687.7,400.2 688.4,400.3 689.0,400.5 689.7,400.7 690.4,400.9 691.0,401.0 691.7,401.2 692.4,401.3 693.1,401.5 693.7,401.6 694.4,401.8 695.1,401.9 695.7,402.1 696.4,402.2 697.1,402.3 697.7,402.5 698.4,402.6 699.1,402.7 699.7,402.8 700.4,403.0 701.1,403.1 701.8,403.2 702.4,403.3 703.1,403.4 703.8,403.5 704.4,403.6 705.1,403.8 705.8,403.9 706.4,404.0 707.1,404.1 707.8,404.2 708.4,404.3 709.1,404.4 709.8,404.4 710.4,404.5 711.1,404.6 711.8,404.7 712.5,404.8 713.1,404.9 713.8,405.0 714.5,405.1 715.1,405.1 715.8,405.2 716.5,405.3 717.1,405.4 717.8,405.5 718.5,405.5 719.1,405.6 719.8,405.7 720.5,405.8 721.2,405.8 721.8,405.9 722.5,406.0 723.2,406.0 723.8,406.1 724.5,406.2 725.2,406.2 725.8,406.3 726.5,406.4 727.2,406.4 727.8,406.5 728.5,406.5 729.2,406.6 729.9,406.7 730.5,406.7 731.2,406.8 731.9,406.8 732.5,406.9 733.2,406.9 733.9,407.0 734.5,407.0 735.2,407.1 735.9,407.1 736.5,407.2 737.2,407.2 737.9,407.3 738.5,407.3 739.2,407.4 739.9,407.4 740.6,407.5" fill="none" stroke="#e8605a" stroke-width="1.0" stroke-linejoin="round" shape-rendering="crispEdges"/><polyline points="295.0,409.5 296.8,409.5 301.1,410.9 308.2,410.2 315.3,410.9 321.7,406.0 326.6,408.8 335.1,410.2 337.1,409.8 344.2,409.4 347.7,404.7 351.3,404.7 354.8,406.5 358.4,401.7 361.9,389.9 365.5,368.6 369.0,355.6 374.3,357.4 379.6,366.9 384.4,372.2 391.5,374.0 396.2,372.8 398.6,368.0 406.8,366.9 415.1,363.3 423.4,359.2 430.0,363.9 433.1,366.5 439.7,370.6 448.0,373.1 453.0,377.3 462.9,383.0 471.2,382.7 474.5,384.7 481.1,388.0 489.4,388.0 494.4,384.7 499.3,377.3 501.0,378.8 502.5,377.2 504.0,376.2 505.5,373.8 507.0,372.6 508.5,370.4 510.0,367.9 511.5,366.2 513.0,363.3 514.5,361.2 516.0,358.1 517.5,355.2 519.0,352.6 520.5,349.9 522.0,345.7 523.5,342.3 525.0,339.1 526.5,335.6 528.0,331.1 529.5,326.7 531.0,322.9 532.5,317.1 534.0,313.2 535.5,307.3 537.0,301.7 538.5,296.0 540.0,290.2 541.5,284.5 543.0,277.1 544.5,270.7 546.0,263.4 547.5,255.5 549.0,247.8 550.5,239.0 552.0,230.6 553.5,222.2 555.0,214.2 556.5,205.3 558.0,196.7 559.5,188.8 561.0,180.7 562.5,173.1 564.0,167.0 565.5,160.9 567.0,155.4 568.5,152.0 570.0,149.4 571.5,148.5 573.0,148.4 574.5,149.2 576.0,152.4 577.5,154.7 579.0,159.1 580.5,164.1 582.0,168.0 583.5,172.6 585.0,175.3 586.5,177.3 588.0,175.7 589.5,170.5 591.0,162.7 592.5,152.5 594.0,144.8 595.5,141.2 597.0,145.0 598.5,156.5 600.0,174.7 601.5,195.3 603.0,214.6 604.5,231.9 606.0,244.5 607.5,255.5 609.0,263.3 610.5,270.1 612.0,275.6 613.5,280.2 615.0,285.5 616.5,290.9 618.0,295.1 619.5,300.6 621.0,305.1 622.5,309.8 624.0,314.3 625.5,319.7 627.0,323.4 628.5,327.9 630.0,332.2 631.5,336.8 633.0,339.8 634.5,344.0 636.0,347.7 637.5,351.5 639.0,354.7 640.5,357.8 642.0,359.7 643.5,361.8 645.0,363.2 646.5,366.0 648.0,369.3 649.5,371.7 651.0,374.6 652.5,376.9 654.0,378.9 655.5,380.9 657.0,382.7 658.5,383.8 660.0,385.0 661.5,386.8 663.0,387.9 664.5,389.1 666.0,389.9 667.5,389.4 669.0,388.7 670.5,388.9 672.0,390.2 673.5,391.6 675.0,394.7 676.5,396.1 678.0,397.2 679.5,397.8 681.0,397.9 682.5,398.4 684.0,398.4 685.5,399.0 687.0,397.5 688.5,396.4 690.0,396.4 691.5,397.8 693.0,399.9 694.5,400.9 696.0,401.4 697.5,402.0 699.0,402.2 700.5,402.8 702.0,402.7 703.5,403.9 705.0,403.6 706.5,402.7 708.0,402.1 709.5,401.7 711.0,402.3 712.5,403.2 714.0,405.0 715.5,405.7 717.0,405.3 718.5,405.5 720.0,405.1 721.5,404.7 723.0,403.6 724.5,401.8 726.0,402.4 727.5,403.4 729.0,405.0 730.5,406.2 732.0,404.3 733.5,403.3 735.0,405.3 736.5,406.1 738.0,407.3 739.5,408.0 741.0,407.9" fill="none" stroke="#ffffff" stroke-width="1.1" stroke-linejoin="round" shape-rendering="crispEdges"/><polyline points="400.9,365.8 401.9,365.5 402.9,365.2 403.9,365.0 404.9,364.8 405.9,364.6 406.9,364.4 407.9,364.2 409.0,364.1 410.0,364.0 411.0,363.9 412.0,363.8 413.0,363.8 414.0,363.8 415.0,363.8 416.0,363.8 417.0,363.9 418.0,364.0 419.0,364.2 420.0,364.4 421.0,364.7 422.0,365.0 423.0,365.3 424.0,365.7 425.0,366.1 426.0,366.5 427.0,367.0 428.0,367.5 429.0,368.0 430.0,368.6 431.0,369.1 432.0,369.8 433.0,370.4 434.0,371.1 435.0,371.8 436.0,372.5 437.1,373.2 438.1,374.0 439.1,374.7 440.1,375.5 441.1,376.3 442.1,377.1 443.1,377.9 444.1,378.7 445.1,379.6 446.1,380.4 447.1,381.2 448.1,382.0 449.1,382.9 450.1,383.7 451.1,384.5 452.1,385.4 453.1,386.2 454.1,387.0 455.1,387.8 456.1,388.6 457.1,389.3 458.1,390.1 459.1,390.9 460.1,391.6 461.1,392.3 462.1,393.1 463.1,393.7 464.1,394.4 465.1,395.1 466.2,395.7 467.2,396.4 468.2,397.0 469.2,397.6 470.2,398.2 471.2,398.7 472.2,399.3 473.2,399.8 474.2,400.3 475.2,400.8 476.2,401.2 477.2,401.7 478.2,402.1 479.2,402.5 480.2,402.9 481.2,403.3 482.2,403.7 483.2,404.0 484.2,404.4 485.2,404.7 486.2,405.0 487.2,405.3 488.2,405.5 489.2,405.8 490.2,406.0 491.2,406.3 492.2,406.5 493.2,406.7 494.3,406.9 495.3,407.1 496.3,407.2 497.3,407.4 498.3,407.5 499.3,407.7 500.3,407.8 501.3,407.9 502.3,408.1 503.3,408.2 504.3,408.3 505.3,408.4 506.3,408.5 507.3,408.5 508.3,408.6 509.3,408.7 510.3,408.8 511.3,408.8 512.3,408.9 513.3,408.9 514.3,409.0 515.3,409.0 516.3,409.1 517.3,409.1 518.3,409.1 519.3,409.2 520.3,409.2 521.3,409.2 522.3,409.3 523.4,409.3 524.4,409.3 525.4,409.3 526.4,409.3 527.4,409.3 528.4,409.4 529.4,409.4 530.4,409.4 531.4,409.4 532.4,409.4 533.4,409.4 534.4,409.4 535.4,409.4 536.4,409.4 537.4,409.4 538.4,409.5 539.4,409.5 540.4,409.5 541.4,409.5 542.4,409.5 543.4,409.5 544.4,409.5 545.4,409.5 546.4,409.5 547.4,409.5 548.4,409.5 549.4,409.5 550.4,409.5 551.4,409.5 552.5,409.5 553.5,409.5 554.5,409.5 555.5,409.5 556.5,409.5 557.5,409.5 558.5,409.5 559.5,409.5 560.5,409.5 561.5,409.5 562.5,409.5 563.5,409.5 564.5,409.5 565.5,409.5 566.5,409.5 567.5,409.5 568.5,409.5 569.5,409.5 570.5,409.5 571.5,409.5 572.5,409.5 573.5,409.5 574.5,409.5 575.5,409.5 576.5,409.5 577.5,409.5 578.5,409.5 579.5,409.5 580.6,409.5 581.6,409.5 582.6,409.5 583.6,409.5 584.6,409.5 585.6,409.5 586.6,409.5 587.6,409.5 588.6,409.5 589.6,409.5 590.6,409.5 591.6,409.5 592.6,409.5 593.6,409.5 594.6,409.5 595.6,409.5 596.6,409.5 597.6,409.5 598.6,409.5 599.6,409.5 600.6,409.5 601.6,409.5 602.6,409.5 603.6,409.5 604.6,409.5 605.6,409.5 606.6,409.5 607.6,409.5 608.6,409.5 609.7,409.5 610.7,409.5 611.7,409.5 612.7,409.5 613.7,409.5 614.7,409.5 615.7,409.5 616.7,409.5 617.7,409.5 618.7,409.5 619.7,409.5 620.7,409.5 621.7,409.5 622.7,409.5 623.7,409.5 624.7,409.5 625.7,409.5 626.7,409.5 627.7,409.5 628.7,409.5 629.7,409.5 630.7,409.5 631.7,409.5 632.7,409.5 633.7,409.5 634.7,409.5 635.7,409.5 636.7,409.5 637.8,409.5 638.8,409.5 639.8,409.5 640.8,409.5 641.8,409.5 642.8,409.5 643.8,409.5 644.8,409.5 645.8,409.5 646.8,409.5 647.8,409.5 648.8,409.5 649.8,409.5 650.8,409.5 651.8,409.5 652.8,409.5 653.8,409.5 654.8,409.5 655.8,409.5 656.8,409.5 657.8,409.5 658.8,409.5 659.8,409.5 660.8,409.5 661.8,409.5 662.8,409.5 663.8,409.5 664.8,409.5 665.8,409.5 666.9,409.5 667.9,409.5 668.9,409.5 669.9,409.5 670.9,409.5 671.9,409.5 672.9,409.5 673.9,409.5 674.9,409.5 675.9,409.5 676.9,409.5 677.9,409.5 678.9,409.5 679.9,409.5 680.9,409.5 681.9,409.5 682.9,409.5 683.9,409.5 684.9,409.5 685.9,409.5 686.9,409.5 687.9,409.5 688.9,409.5 689.9,409.5 690.9,409.5 691.9,409.5 692.9,409.5 693.9,409.5 695.0,409.5 696.0,409.5 697.0,409.5 698.0,409.5 699.0,409.5 700.0,409.5 701.0,409.5 702.0,409.5 703.0,409.5 704.0,409.5 705.0,409.5 706.0,409.5 707.0,409.5 708.0,409.5 709.0,409.5 710.0,409.5 711.0,409.5 712.0,409.5 713.0,409.5 714.0,409.5 715.0,409.5 716.0,409.5 717.0,409.5 718.0,409.5 719.0,409.5 720.0,409.5 721.0,409.5 722.0,409.5 723.0,409.5 724.1,409.5 725.1,409.5 726.1,409.5 727.1,409.5 728.1,409.5 729.1,409.5 730.1,409.5 731.1,409.5 732.1,409.5 733.1,409.5 734.1,409.5 735.1,409.5 736.1,409.5 737.1,409.5 738.1,409.5 739.1,409.5 740.1,409.5" fill="none" stroke="#58c0f0" stroke-width="1.0" stroke-linejoin="round" shape-rendering="crispEdges"/><polyline points="295.0,409.5 296.0,409.5 297.0,409.5 298.0,409.5 299.0,409.5 300.0,409.5 301.0,409.5 302.0,409.5 303.0,409.5 304.0,409.5 305.0,409.5 306.0,409.5 307.0,409.5 308.0,409.5 309.0,409.5 310.1,409.5 311.1,409.5 312.1,409.5 313.1,409.5 314.1,409.5 315.1,409.5 316.1,409.5 317.1,409.5 318.1,409.5 319.1,409.5 320.1,409.5 321.1,409.5 322.1,409.5 323.1,409.5 324.1,409.5 325.1,409.5 326.1,409.5 327.1,409.5 328.1,409.5 329.1,409.5 330.1,409.5 331.1,409.5 332.1,409.5 333.1,409.5 334.1,409.5 335.1,409.5 336.1,409.5 337.1,409.5 338.2,409.5 339.2,409.5 340.2,409.5 341.2,409.5 342.2,409.5 343.2,409.5 344.2,409.5 345.2,409.5 346.2,409.5 347.2,409.5 348.2,409.5 349.2,409.5 350.2,409.5 351.2,409.5 352.2,409.5 353.2,409.5 354.2,409.5 355.2,409.5 356.2,409.5 357.2,409.5 358.2,409.5 359.2,409.5 360.2,409.5 361.2,409.5 362.2,409.5 363.2,409.5 364.2,409.5 365.2,409.5 366.2,409.5 367.3,409.5 368.3,409.5 369.3,409.5 370.3,409.5 371.3,409.5 372.3,409.5 373.3,409.5 374.3,409.5 375.3,409.5 376.3,409.5 377.3,409.5 378.3,409.5 379.3,409.5 380.3,409.5 381.3,409.5 382.3,409.5 383.3,409.5 384.3,409.5 385.3,409.5 386.3,409.5 387.3,409.5 388.3,409.5 389.3,409.5 390.3,409.5 391.3,409.5 392.3,409.5 393.3,409.5 394.3,409.5 395.3,409.5 396.4,409.5 397.4,409.5 398.4,409.5 399.4,409.5 400.4,409.5 401.4,409.5 402.4,409.5 403.4,409.5 404.4,409.5 405.4,409.5 406.4,409.5 407.4,409.5 408.4,409.5 409.4,409.5 410.4,409.5 411.4,409.5 412.4,409.5 413.4,409.5 414.4,409.5 415.4,409.5 416.4,409.5 417.4,409.5 418.4,409.5 419.4,409.5 420.4,409.5 421.4,409.5 422.4,409.5 423.4,409.5 424.5,409.5 425.5,409.5 426.5,409.5 427.5,409.5 428.5,409.5 429.5,409.5 430.5,409.5 431.5,409.5 432.5,409.5 433.5,409.5 434.5,409.5 435.5,409.5 436.5,409.5 437.5,409.5 438.5,409.5 439.5,409.5 440.5,409.5 441.5,409.5 442.5,409.5 443.5,409.5 444.5,409.5 445.5,409.5 446.5,409.5 447.5,409.5 448.5,409.5 449.5,409.5 450.5,409.5 451.5,409.5 452.5,409.5 453.6,409.5 454.6,409.5 455.6,409.5 456.6,409.5 457.6,409.5 458.6,409.5 459.6,409.5 460.6,409.5 461.6,409.5 462.6,409.5 463.6,409.5 464.6,409.5 465.6,409.5 466.6,409.5 467.6,409.5 468.6,409.5 469.6,409.5 470.6,409.5 471.6,409.5 472.6,409.5 473.6,409.5 474.6,409.5 475.6,409.5" fill="none" stroke="#30d030" stroke-width="1.0" stroke-linejoin="round" shape-rendering="crispEdges"/><polyline points="395.4,408.1 396.4,408.1 397.4,408.0 398.4,408.0 399.4,407.9 400.4,407.8 401.4,407.8 402.4,407.7 403.4,407.7 404.4,407.6 405.4,407.6 406.4,407.5 407.4,407.4 408.4,407.4 409.4,407.3 410.4,407.2 411.4,407.1 412.4,407.1 413.4,407.0 414.4,406.9 415.4,406.8 416.4,406.8 417.4,406.7 418.4,406.6 419.4,406.5 420.4,406.4 421.4,406.3 422.4,406.2 423.4,406.1 424.5,406.0 425.5,405.9 426.5,405.8 427.5,405.7 428.5,405.6 429.5,405.5 430.5,405.4 431.5,405.3 432.5,405.2 433.5,405.1 434.5,404.9 435.5,404.8 436.5,404.7 437.5,404.6 438.5,404.4 439.5,404.3 440.5,404.2 441.5,404.0 442.5,403.9 443.5,403.8 444.5,403.6 445.5,403.5 446.5,403.3 447.5,403.2 448.5,403.0 449.5,402.8 450.5,402.7 451.5,402.5 452.5,402.4 453.6,402.2 454.6,402.0 455.6,401.9 456.6,401.7 457.6,401.5 458.6,401.3 459.6,401.1 460.6,401.0 461.6,400.8 462.6,400.6 463.6,400.4 464.6,400.2 465.6,400.0 466.6,399.8 467.6,399.6 468.6,399.4 469.6,399.2 470.6,399.0 471.6,398.8 472.6,398.6 473.6,398.4 474.6,398.2 475.6,397.9 476.6,397.7 477.6,397.5 478.6,397.3 479.6,397.1 480.6,396.8 481.7,396.6 482.7,396.4 483.7,396.2 484.7,395.9 485.7,395.7 486.7,395.5 487.7,395.2 488.7,395.0 489.7,394.8 490.7,394.5 491.7,394.3 492.7,394.0 493.7,393.8 494.7,393.6 495.7,393.3 496.7,393.1 497.7,392.8 498.7,392.6 499.7,392.4 500.7,392.1 501.7,391.9 502.7,391.6 503.7,391.4 504.7,391.1 505.7,390.9 506.7,390.7 507.7,390.4 508.7,390.2 509.7,389.9 510.8,389.7 511.8,389.5 512.8,389.2 513.8,389.0 514.8,388.8 515.8,388.5 516.8,388.3 517.8,388.1 518.8,387.8 519.8,387.6 520.8,387.4 521.8,387.2 522.8,386.9 523.8,386.7 524.8,386.5 525.8,386.3 526.8,386.1 527.8,385.9 528.8,385.7 529.8,385.5 530.8,385.3 531.8,385.1 532.8,384.9 533.8,384.7 534.8,384.5 535.8,384.3 536.8,384.1 537.8,383.9 538.9,383.8 539.9,383.6 540.9,383.4 541.9,383.3 542.9,383.1 543.9,383.0 544.9,382.8 545.9,382.7 546.9,382.5 547.9,382.4 548.9,382.3 549.9,382.1 550.9,382.0 551.9,381.9 552.9,381.8 553.9,381.7 554.9,381.6 555.9,381.5 556.9,381.4 557.9,381.3 558.9,381.2 559.9,381.1 560.9,381.1 561.9,381.0 562.9,380.9 563.9,380.9 564.9,380.8 565.9,380.8 566.9,380.7 568.0,380.7 569.0,380.7 570.0,380.6 571.0,380.6 572.0,380.6 573.0,380.6 574.0,380.6 575.0,380.6 576.0,380.6 577.0,380.6 578.0,380.7 579.0,380.7 580.0,380.7 581.0,380.8 582.0,380.8 583.0,380.8 584.0,380.9 585.0,381.0 586.0,381.0 587.0,381.1 588.0,381.2 589.0,381.2 590.0,381.3 591.0,381.4 592.0,381.5 593.0,381.6 594.0,381.7 595.0,381.8 596.0,381.9 597.1,382.1 598.1,382.2 599.1,382.3 600.1,382.4 601.1,382.6 602.1,382.7 603.1,382.9 604.1,383.0 605.1,383.2 606.1,383.3 607.1,383.5 608.1,383.7 609.1,383.8 610.1,384.0 611.1,384.2 612.1,384.4 613.1,384.6 614.1,384.8 615.1,384.9 616.1,385.1 617.1,385.3 618.1,385.5 619.1,385.7 620.1,386.0 621.1,386.2 622.1,386.4 623.1,386.6 624.1,386.8 625.2,387.0 626.2,387.3 627.2,387.5 628.2,387.7 629.2,387.9 630.2,388.2 631.2,388.4 632.2,388.6 633.2,388.9 634.2,389.1 635.2,389.3 636.2,389.6 637.2,389.8 638.2,390.0 639.2,390.3 640.2,390.5 641.2,390.8 642.2,391.0 643.2,391.2 644.2,391.5 645.2,391.7 646.2,392.0 647.2,392.2 648.2,392.5 649.2,392.7 650.2,392.9 651.2,393.2 652.2,393.4 653.2,393.7 654.3,393.9 655.3,394.1 656.3,394.4 657.3,394.6 658.3,394.9 659.3,395.1 660.3,395.3 661.3,395.6 662.3,395.8 663.3,396.0 664.3,396.3 665.3,396.5 666.3,396.7 667.3,396.9 668.3,397.2 669.3,397.4 670.3,397.6 671.3,397.8 672.3,398.0 673.3,398.3 674.3,398.5 675.3,398.7 676.3,398.9 677.3,399.1 678.3,399.3 679.3,399.5 680.3,399.7 681.3,399.9 682.4,400.1 683.4,400.3 684.4,400.5 685.4,400.7 686.4,400.9 687.4,401.0 688.4,401.2 689.4,401.4 690.4,401.6 691.4,401.8 692.4,401.9 693.4,402.1 694.4,402.3 695.4,402.4 696.4,402.6 697.4,402.8 698.4,402.9 699.4,403.1 700.4,403.2 701.4,403.4 702.4,403.5 703.4,403.7 704.4,403.8 705.4,404.0 706.4,404.1 707.4,404.2 708.4,404.4 709.4,404.5 710.4,404.6 711.5,404.7 712.5,404.9 713.5,405.0 714.5,405.1 715.5,405.2 716.5,405.3 717.5,405.5 718.5,405.6 719.5,405.7 720.5,405.8 721.5,405.9 722.5,406.0 723.5,406.1 724.5,406.2 725.5,406.3 726.5,406.4 727.5,406.5 728.5,406.5 729.5,406.6 730.5,406.7 731.5,406.8 732.5,406.9 733.5,407.0 734.5,407.0 735.5,407.1 736.5,407.2 737.5,407.3 738.5,407.3 739.6,407.4 740.6,407.5" fill="none" stroke="#a850d8" stroke-width="1.0" stroke-linejoin="round" shape-rendering="crispEdges"/><polyline points="518.0,409.5 518.7,409.5 519.3,409.4 520.0,409.4 520.7,409.4 521.3,409.4 522.0,409.4 522.7,409.4 523.4,409.3 524.0,409.3 524.7,409.3 525.4,409.2 526.0,409.2 526.7,409.1 527.4,409.1 528.0,409.0 528.7,408.9 529.4,408.8 530.0,408.7 530.7,408.6 531.4,408.5 532.0,408.3 532.7,408.1 533.4,407.9 534.1,407.7 534.7,407.5 535.4,407.2 536.1,406.9 536.7,406.5 537.4,406.1 538.1,405.7 538.7,405.2 539.4,404.7 540.1,404.1 540.7,403.5 541.4,402.9 542.1,402.1 542.8,401.3 543.4,400.5 544.1,399.6 544.8,398.6 545.4,397.6 546.1,396.5 546.8,395.3 547.4,394.1 548.1,392.8 548.8,391.4 549.4,390.0 550.1,388.5 550.8,386.9 551.5,385.4 552.1,383.7 552.8,382.0 553.5,380.3 554.1,378.6 554.8,376.8 555.5,375.0 556.1,373.3 556.8,371.5 557.5,369.7 558.1,368.0 558.8,366.3 559.5,364.6 560.1,363.0 560.8,361.5 561.5,360.0 562.2,358.6 562.8,357.3 563.5,356.1 564.2,355.1 564.8,354.1 565.5,353.3 566.2,352.6 566.8,352.0 567.5,351.6 568.2,351.3 568.8,351.2 569.5,351.2 570.2,351.4 570.9,351.7 571.5,352.2 572.2,352.8 572.9,353.5 573.5,354.4 574.2,355.4 574.9,356.5 575.5,357.7 576.2,359.1 576.9,360.5 577.5,362.0 578.2,363.5 578.9,365.2 579.5,366.8 580.2,368.6 580.9,370.3 581.6,372.1 582.2,373.8 582.9,375.6 583.6,377.4 584.2,379.2 584.9,380.9 585.6,382.6 586.2,384.3 586.9,385.9 587.6,387.5 588.2,389.0 588.9,390.5 589.6,391.9 590.3,393.2 590.9,394.5 591.6,395.7 592.3,396.8 592.9,397.9 593.6,398.9 594.3,399.9 594.9,400.8 595.6,401.6 596.3,402.4 596.9,403.1 597.6,403.7 598.3,404.3 598.9,404.9 599.6,405.4 600.3,405.8 601.0,406.3 601.6,406.6 602.3,407.0 603.0,407.3 603.6,407.5 604.3,407.8 605.0,408.0 605.6,408.2 606.3,408.4 607.0,408.5 607.6,408.6 608.3,408.8 609.0,408.9 609.7,409.0 610.3,409.0 611.0,409.1 611.7,409.2 612.3,409.2 613.0,409.3 613.7,409.3 614.3,409.3 615.0,409.4 615.7,409.4 616.3,409.4 617.0,409.4 617.7,409.4 618.4,409.4 619.0,409.5 619.7,409.5 620.4,409.5 621.0,409.5 621.7,409.5 622.4,409.5 623.0,409.5 623.7,409.5" fill="none" stroke="#f0f080" stroke-width="1.0" stroke-linejoin="round" shape-rendering="crispEdges"/><polyline points="568.2,409.5 568.6,409.5 569.1,409.5 569.5,409.5 570.0,409.5 570.4,409.5 570.9,409.5 571.3,409.5 571.7,409.5 572.2,409.5 572.6,409.5 573.1,409.5 573.5,409.5 574.0,409.5 574.4,409.5 574.9,409.5 575.3,409.5 575.8,409.5 576.2,409.5 576.6,409.5 577.1,409.5 577.5,409.5 578.0,409.5 578.4,409.4 578.9,409.4 579.3,409.4 579.8,409.3 580.2,409.3 580.7,409.2 581.1,409.1 581.6,409.0 582.0,408.8 582.4,408.5 582.9,408.2 583.3,407.8 583.8,407.3 584.2,406.7 584.7,405.9 585.1,405.0 585.6,403.8 586.0,402.5 586.5,400.9 586.9,399.0 587.4,396.8 587.8,394.3 588.2,391.5 588.7,388.3 589.1,384.8 589.6,381.1 590.0,377.0 590.5,372.7 590.9,368.2 591.4,363.5 591.8,358.8 592.3,354.1 592.7,349.5 593.2,345.2 593.6,341.1 594.0,337.4 594.5,334.3 594.9,331.7 595.4,329.7 595.8,328.4 596.3,327.9 596.7,328.1 597.2,329.0 597.6,330.6 598.1,332.9 598.5,335.8 598.9,339.2 599.4,343.1 599.8,347.3 600.3,351.8 600.7,356.4 601.2,361.2 601.6,365.8 602.1,370.4 602.5,374.9 603.0,379.1 603.4,383.0 603.9,386.6 604.3,389.9 604.7,392.9 605.2,395.6 605.6,397.9 606.1,399.9 606.5,401.7 607.0,403.2 607.4,404.4 607.9,405.5 608.3,406.3 608.8,407.0 609.2,407.6 609.7,408.0 610.1,408.4 610.5,408.7 611.0,408.9 611.4,409.0 611.9,409.2 612.3,409.3 612.8,409.3 613.2,409.4 613.7,409.4 614.1,409.4 614.6,409.5 615.0,409.5 615.5,409.5 615.9,409.5 616.3,409.5 616.8,409.5 617.2,409.5 617.7,409.5 618.1,409.5 618.6,409.5 619.0,409.5 619.5,409.5 619.9,409.5 620.4,409.5 620.8,409.5 621.2,409.5 621.7,409.5 622.1,409.5 622.6,409.5 623.0,409.5 623.5,409.5 623.9,409.5 624.4,409.5 624.8,409.5 625.3,409.5 625.7,409.5 626.2,409.5 626.6,409.5 627.0,409.5 627.5,409.5 627.9,409.5 628.4,409.5 628.8,409.5 629.3,409.5" fill="none" stroke="#f0a850" stroke-width="1.0" stroke-linejoin="round" shape-rendering="crispEdges"/><polyline points="464.5,409.0 465.5,408.9 466.5,408.9 467.5,408.8 468.5,408.8 469.5,408.7 470.5,408.6 471.5,408.5 472.5,408.4 473.5,408.3 474.5,408.2 475.5,408.0 476.5,407.9 477.5,407.7 478.5,407.6 479.5,407.4 480.5,407.2 481.5,407.0 482.5,406.8 483.5,406.5 484.5,406.3 485.6,406.0 486.6,405.7 487.6,405.3 488.6,405.0 489.6,404.6 490.6,404.2 491.6,403.8 492.6,403.3 493.6,402.8 494.6,402.3 495.6,401.7 496.6,401.1 497.6,400.5 498.6,399.8 499.6,399.1 500.6,398.4 501.6,397.6 502.6,396.7 503.6,395.8 504.6,394.9 505.6,393.9 506.6,392.8 507.6,391.7 508.6,390.5 509.6,389.3 510.6,388.0 511.6,386.7 512.6,385.3 513.7,383.8 514.7,382.3 515.7,380.7 516.7,379.0 517.7,377.3 518.7,375.4 519.7,373.6 520.7,371.6 521.7,369.6 522.7,367.5 523.7,365.4 524.7,363.2 525.7,360.9 526.7,358.5 527.7,356.1 528.7,353.6 529.7,351.0 530.7,348.4 531.7,345.8 532.7,343.0 533.7,340.2 534.7,337.4 535.7,334.5 536.7,331.6 537.7,328.6 538.7,325.6 539.7,322.5 540.7,319.4 541.7,316.3 542.8,313.2 543.8,310.1 544.8,306.9 545.8,303.7 546.8,300.6 547.8,297.4 548.8,294.3 549.8,291.2 550.8,288.1 551.8,285.0 552.8,281.9 553.8,278.9 554.8,276.0 555.8,273.1 556.8,270.3 557.8,267.5 558.8,264.8 559.8,262.2 560.8,259.7 561.8,257.3 562.8,255.0 563.8,252.8 564.8,250.7 565.8,248.7 566.8,246.8 567.8,245.0 568.8,243.4 569.8,241.9 570.9,240.6 571.9,239.4 572.9,238.3 573.9,237.4 574.9,236.7 575.9,236.1 576.9,235.6 577.9,235.3 578.9,235.1 579.9,235.2 580.9,235.3 581.9,235.6 582.9,236.1 583.9,236.7 584.9,237.5 585.9,238.5 586.9,239.5 587.9,240.7 588.9,242.1 589.9,243.6 590.9,245.2 591.9,247.0 592.9,248.9 593.9,250.9 594.9,253.0 595.9,255.2 596.9,257.6 597.9,260.0 598.9,262.5 600.0,265.1 601.0,267.8 602.0,270.6 603.0,273.4 604.0,276.3 605.0,279.3 606.0,282.3 607.0,285.3 608.0,288.4 609.0,291.5 610.0,294.6 611.0,297.8 612.0,300.9 613.0,304.1 614.0,307.3 615.0,310.4 616.0,313.6 617.0,316.7 618.0,319.8 619.0,322.9 620.0,325.9 621.0,328.9 622.0,331.9 623.0,334.8 624.0,337.7 625.0,340.5 626.0,343.3 627.0,346.1 628.1,348.7 629.1,351.3 630.1,353.9 631.1,356.4 632.1,358.8 633.1,361.1 634.1,363.4 635.1,365.6 636.1,367.8 637.1,369.8 638.1,371.8 639.1,373.8 640.1,375.6 641.1,377.4 642.1,379.2 643.1,380.8 644.1,382.4 645.1,384.0 646.1,385.4 647.1,386.8 648.1,388.2 649.1,389.4 650.1,390.7 651.1,391.8 652.1,392.9 653.1,394.0 654.1,395.0 655.1,395.9 656.1,396.8 657.2,397.6 658.2,398.4 659.2,399.2 660.2,399.9 661.2,400.6 662.2,401.2 663.2,401.8 664.2,402.4 665.2,402.9 666.2,403.4 667.2,403.8 668.2,404.3 669.2,404.7 670.2,405.0 671.2,405.4 672.2,405.7 673.2,406.0 674.2,406.3 675.2,406.6 676.2,406.8 677.2,407.0 678.2,407.2 679.2,407.4 680.2,407.6 681.2,407.8 682.2,407.9 683.2,408.1 684.2,408.2 685.2,408.3 686.3,408.4 687.3,408.5 688.3,408.6 689.3,408.7 690.3,408.8 691.3,408.8 692.3,408.9 693.3,409.0 694.3,409.0 695.3,409.1 696.3,409.1 697.3,409.1 698.3,409.2 699.3,409.2 700.3,409.2 701.3,409.3 702.3,409.3 703.3,409.3 704.3,409.3 705.3,409.3 706.3,409.4 707.3,409.4 708.3,409.4 709.3,409.4 710.3,409.4 711.3,409.4 712.3,409.4 713.3,409.4 714.4,409.4 715.4,409.5 716.4,409.5 717.4,409.5 718.4,409.5 719.4,409.5 720.4,409.5 721.4,409.5 722.4,409.5 723.4,409.5 724.4,409.5 725.4,409.5 726.4,409.5 727.4,409.5 728.4,409.5 729.4,409.5 730.4,409.5 731.4,409.5 732.4,409.5 733.4,409.5 734.4,409.5 735.4,409.5 736.4,409.5 737.4,409.5 738.4,409.5 739.4,409.5 740.4,409.5" fill="none" stroke="#38e038" stroke-width="1.0" stroke-linejoin="round" shape-rendering="crispEdges"/></g></svg>
<div class="r" style="left:669px;top:124px;width:97px;height:46px;background:#c8c8c8;"></div>
<div class="r" style="left:669px;top:124px;width:12px;height:46px;background:linear-gradient(to right,#bdbdbd,#e4e4e4 25%,#c8c8c8);"></div>
<div class="r" style="left:669px;top:124px;width:97px;height:3px;background:linear-gradient(#e2e2e2,#c8c8c8);"></div>
<div class="r" style="left:740px;top:124px;width:26px;height:46px;background:linear-gradient(to right,#d0d0d0,#a8a8a8 50%,#7a7a7a);"></div>
<div class="r" style="left:669px;top:166px;width:97px;height:4px;background:linear-gradient(#c8c8c8,#9a9a9a);"></div>
<div class="r" style="left:722px;top:126px;width:28px;height:41px;background:#000;"></div>
<svg class="r" style="left:722px;top:126px" width="28" height="41" viewBox="0 0 28 41"><polyline points="2,14 12.3,3.5 22.7,14 27,9" fill="none" stroke="#fff" stroke-width="1.1"/><polyline points="2,36.5 10.3,26 18.1,36.5 27,26" fill="none" stroke="#d86060" stroke-width="1"/></svg>
<div class="t" style="left:683.0px;top:128.63px;font-size:11.66px;line-height:11.66px;color:#000;transform:scaleX(0.9346);transform-origin:0 0;">Data</div>
<div class="t" style="left:683.0px;top:151.84px;font-size:11.77px;line-height:11.77px;color:#000;transform:scaleX(0.9346);transform-origin:0 0;">Result</div>
<div class="t" style="left:244.0px;top:492.61px;font-size:12.63px;line-height:12.63px;color:#000;transform:scaleX(0.9346);transform-origin:0 0;">Peak Number</div>
<svg class="r" style="left:258px;top:506px" width="12" height="24" viewBox="0 0 12 24">
<defs><radialGradient id="ag258506" cx="40%" cy="40%" r="70%"><stop offset="0" stop-color="#f4f4f4"/><stop offset=".6" stop-color="#d8d8d8"/><stop offset="1" stop-color="#9a9a9a"/></radialGradient></defs>
<ellipse cx="6.0" cy="12.0" rx="5.7" ry="11.7" fill="url(#ag258506)" stroke="#6e7c78" stroke-width=".8"/>
<line x1="2" y1="12.0" x2="10" y2="12.0" stroke="#b8b8b8" stroke-width=".6"/>
<path d="M4.8 8.8 L6.4 4.8" stroke="#202020" stroke-width="1.3" fill="none"/>
<path d="M6.6 5.5 L7.8 8.5" stroke="#9a9a9a" stroke-width="1" fill="none"/>
<path d="M4.0 14.8 h3.2 M5.4 14.8 v3.6" stroke="#202020" stroke-width="1.2" fill="none"/>
</svg>
<div class="r" style="left:271px;top:508px;width:22px;height:23px;background:#d8d8d8;border-top:3px solid #a8a8a8;border-left:1px solid #b8b8b8;border-right:3px solid #e6e6e6;border-bottom:3px solid #e6e6e6;box-sizing:border-box;"></div>
<div class="r" style="left:272px;top:511px;width:18px;height:17px;background:#ffffff;"></div>
<div class="t" style="left:276.1px;top:514.43px;font-size:11.66px;line-height:11.66px;color:#000;transform:scaleX(0.9346);transform-origin:0 0;">0</div>
<div class="t" style="left:336.2px;top:488.19px;font-size:12.65px;line-height:12.65px;color:#000;transform:scaleX(0.9346);transform-origin:0 0;">Location (s)Height (W/g)FWHH L (s)</div>
<svg class="r" style="left:337px;top:504px" width="64" height="32" viewBox="0 0 64 32">
<defs><linearGradient id="bt7" x1="0" y1="0" x2="0" y2="1"><stop offset="0" stop-color="#b8b8b8"/><stop offset="1" stop-color="#8e8e8e"/></linearGradient>
<linearGradient id="bl7" x1="0" y1="0" x2="1" y2="0"><stop offset="0" stop-color="#b4b4b4"/><stop offset="1" stop-color="#989898"/></linearGradient>
<linearGradient id="br7" x1="0" y1="0" x2="1" y2="0"><stop offset="0" stop-color="#c8c8c8"/><stop offset="1" stop-color="#e6e6e6"/></linearGradient>
<linearGradient id="bb7" x1="0" y1="0" x2="0" y2="1"><stop offset="0" stop-color="#cacaca"/><stop offset="1" stop-color="#e4e4e4"/></linearGradient></defs>
<rect x="8" y="7" width="48" height="18" fill="#d8d8d8"/>
<polygon points="0,0 64,0 56,7 8,7" fill="url(#bt7)"/>
<polygon points="0,0 8,7 8,25 0,32" fill="url(#bl7)"/>
<polygon points="64,0 64,32 56,25 56,7" fill="url(#br7)"/>
<polygon points="0,32 64,32 56,25 8,25" fill="url(#bb7)"/>
</svg>
<div class="t" style="left:267.0px;width:200px;text-align:center;top:514.63px;font-size:11.66px;line-height:11.66px;color:#000;transform:scaleX(0.9346);transform-origin:50% 0;">248.1</div>
<svg class="r" style="left:401px;top:504px" width="62" height="32" viewBox="0 0 62 32">
<defs><linearGradient id="bt8" x1="0" y1="0" x2="0" y2="1"><stop offset="0" stop-color="#b8b8b8"/><stop offset="1" stop-color="#8e8e8e"/></linearGradient>
<linearGradient id="bl8" x1="0" y1="0" x2="1" y2="0"><stop offset="0" stop-color="#b4b4b4"/><stop offset="1" stop-color="#989898"/></linearGradient>
<linearGradient id="br8" x1="0" y1="0" x2="1" y2="0"><stop offset="0" stop-color="#c8c8c8"/><stop offset="1" stop-color="#e6e6e6"/></linearGradient>
<linearGradient id="bb8" x1="0" y1="0" x2="0" y2="1"><stop offset="0" stop-color="#cacaca"/><stop offset="1" stop-color="#e4e4e4"/></linearGradient></defs>
<rect x="8" y="7" width="46" height="18" fill="#d8d8d8"/>
<polygon points="0,0 62,0 54,7 8,7" fill="url(#bt8)"/>
<polygon points="0,0 8,7 8,25 0,32" fill="url(#bl8)"/>
<polygon points="62,0 62,32 54,25 54,7" fill="url(#br8)"/>
<polygon points="0,32 62,32 54,25 8,25" fill="url(#bb8)"/>
</svg>
<div class="t" style="left:330.0px;width:200px;text-align:center;top:514.63px;font-size:11.66px;line-height:11.66px;color:#000;transform:scaleX(0.9346);transform-origin:50% 0;">69.4</div>
<svg class="r" style="left:464px;top:504px" width="63" height="32" viewBox="0 0 63 32">
<defs><linearGradient id="bt9" x1="0" y1="0" x2="0" y2="1"><stop offset="0" stop-color="#b8b8b8"/><stop offset="1" stop-color="#8e8e8e"/></linearGradient>
<linearGradient id="bl9" x1="0" y1="0" x2="1" y2="0"><stop offset="0" stop-color="#b4b4b4"/><stop offset="1" stop-color="#989898"/></linearGradient>
<linearGradient id="br9" x1="0" y1="0" x2="1" y2="0"><stop offset="0" stop-color="#c8c8c8"/><stop offset="1" stop-color="#e6e6e6"/></linearGradient>
<linearGradient id="bb9" x1="0" y1="0" x2="0" y2="1"><stop offset="0" stop-color="#cacaca"/><stop offset="1" stop-color="#e4e4e4"/></linearGradient></defs>
<rect x="8" y="7" width="47" height="18" fill="#d8d8d8"/>
<polygon points="0,0 63,0 55,7 8,7" fill="url(#bt9)"/>
<polygon points="0,0 8,7 8,25 0,32" fill="url(#bl9)"/>
<polygon points="63,0 63,32 55,25 55,7" fill="url(#br9)"/>
<polygon points="0,32 63,32 55,25 8,25" fill="url(#bb9)"/>
</svg>
<div class="t" style="left:394.0px;width:200px;text-align:center;top:514.63px;font-size:11.66px;line-height:11.66px;color:#000;transform:scaleX(0.9346);transform-origin:50% 0;">71.2</div>
<div class="t" style="left:250.0px;top:565.63px;font-size:12.84px;line-height:12.84px;color:#000;transform:scaleX(0.9346);transform-origin:0 0;">Thinking</div>
<svg class="r" style="left:259px;top:581px" width="24" height="24" viewBox="0 0 24 24">
<defs><radialGradient id="led2" cx="35%" cy="30%" r="70%"><stop offset="0" stop-color="#6aa060"/><stop offset=".35" stop-color="#2a5a20"/><stop offset="1" stop-color="#0a2406"/></radialGradient></defs>
<circle cx="13.2" cy="13.2" r="8" fill="#f4f4f4"/>
<circle cx="11.6" cy="11.3" r="7.7" fill="url(#led2)"/>
</svg>
<div class="t" style="left:315.3px;top:558.43px;font-size:12.60px;line-height:12.60px;color:#000;transform:scaleX(0.9346);transform-origin:0 0;">Multipeak HRC (J/g-K)</div>
<svg class="r" style="left:342px;top:576px" width="54" height="23" viewBox="0 0 54 23">
<defs><linearGradient id="bt10" x1="0" y1="0" x2="0" y2="1"><stop offset="0" stop-color="#bcbcbc"/><stop offset="1" stop-color="#a4a4a4"/></linearGradient>
<linearGradient id="bl10" x1="0" y1="0" x2="1" y2="0"><stop offset="0" stop-color="#bcbcbc"/><stop offset="1" stop-color="#a8a8a8"/></linearGradient>
<linearGradient id="br10" x1="0" y1="0" x2="1" y2="0"><stop offset="0" stop-color="#d8d8d8"/><stop offset="1" stop-color="#e2e2e2"/></linearGradient>
<linearGradient id="bb10" x1="0" y1="0" x2="0" y2="1"><stop offset="0" stop-color="#dadada"/><stop offset="1" stop-color="#e4e4e4"/></linearGradient></defs>
<rect x="4" y="4" width="47" height="15" fill="#d8d8d8"/>
<polygon points="0,0 54,0 51,4 4,4" fill="url(#bt10)"/>
<polygon points="0,0 4,4 4,19 0,23" fill="url(#bl10)"/>
<polygon points="54,0 54,23 51,19 51,4" fill="url(#br10)"/>
<polygon points="0,23 54,23 51,19 4,19" fill="url(#bb10)"/>
</svg>
<div class="t" style="left:267.0px;width:200px;text-align:center;top:581.83px;font-size:11.66px;line-height:11.66px;color:#000;transform:scaleX(0.9346);transform-origin:50% 0;">154</div>
<div class="t" style="left:328.2px;top:606.36px;font-size:12.57px;line-height:12.57px;color:#000;transform:scaleX(0.9346);transform-origin:0 0;">Total HR (kJ/g)</div>
<svg class="r" style="left:342px;top:624px" width="54" height="23" viewBox="0 0 54 23">
<defs><linearGradient id="bt11" x1="0" y1="0" x2="0" y2="1"><stop offset="0" stop-color="#bcbcbc"/><stop offset="1" stop-color="#a4a4a4"/></linearGradient>
<linearGradient id="bl11" x1="0" y1="0" x2="1" y2="0"><stop offset="0" stop-color="#bcbcbc"/><stop offset="1" stop-color="#a8a8a8"/></linearGradient>
<linearGradient id="br11" x1="0" y1="0" x2="1" y2="0"><stop offset="0" stop-color="#d8d8d8"/><stop offset="1" stop-color="#e2e2e2"/></linearGradient>
<linearGradient id="bb11" x1="0" y1="0" x2="0" y2="1"><stop offset="0" stop-color="#dadada"/><stop offset="1" stop-color="#e4e4e4"/></linearGradient></defs>
<rect x="4" y="4" width="47" height="15" fill="#d8d8d8"/>
<polygon points="0,0 54,0 51,4 4,4" fill="url(#bt11)"/>
<polygon points="0,0 4,4 4,19 0,23" fill="url(#bl11)"/>
<polygon points="54,0 54,23 51,19 51,4" fill="url(#br11)"/>
<polygon points="0,23 54,23 51,19 4,19" fill="url(#bb11)"/>
</svg>
<div class="t" style="left:266.6px;width:200px;text-align:center;top:630.03px;font-size:11.66px;line-height:11.66px;color:#000;transform:scaleX(0.9346);transform-origin:50% 0;">9.7</div>
<div class="t" style="left:480.2px;top:559.78px;font-size:11.83px;line-height:11.83px;color:#000;transform:scaleX(0.9346);transform-origin:0 0;">Peak Area</div>
<svg class="r" style="left:476px;top:574px" width="61" height="28" viewBox="0 0 61 28">
<defs><linearGradient id="bt12" x1="0" y1="0" x2="0" y2="1"><stop offset="0" stop-color="#b8b8b8"/><stop offset="1" stop-color="#8e8e8e"/></linearGradient>
<linearGradient id="bl12" x1="0" y1="0" x2="1" y2="0"><stop offset="0" stop-color="#b4b4b4"/><stop offset="1" stop-color="#989898"/></linearGradient>
<linearGradient id="br12" x1="0" y1="0" x2="1" y2="0"><stop offset="0" stop-color="#c8c8c8"/><stop offset="1" stop-color="#e6e6e6"/></linearGradient>
<linearGradient id="bb12" x1="0" y1="0" x2="0" y2="1"><stop offset="0" stop-color="#cacaca"/><stop offset="1" stop-color="#e4e4e4"/></linearGradient></defs>
<rect x="7" y="7" width="48" height="16" fill="#d8d8d8"/>
<polygon points="0,0 61,0 55,7 7,7" fill="url(#bt12)"/>
<polygon points="0,0 7,7 7,23 0,28" fill="url(#bl12)"/>
<polygon points="61,0 61,28 55,23 55,7" fill="url(#br12)"/>
<polygon points="0,28 61,28 55,23 7,23" fill="url(#bb12)"/>
</svg>
<div class="t" style="left:405.0px;width:200px;text-align:center;top:583.63px;font-size:11.66px;line-height:11.66px;color:#000;transform:scaleX(0.9346);transform-origin:50% 0;">5.22</div>
<div class="t" style="left:472.6px;top:606.94px;font-size:12.12px;line-height:12.12px;color:#000;transform:scaleX(0.9346);transform-origin:0 0;">Area Fraction</div>
<svg class="r" style="left:476px;top:621px" width="61" height="29" viewBox="0 0 61 29">
<defs><linearGradient id="bt13" x1="0" y1="0" x2="0" y2="1"><stop offset="0" stop-color="#b8b8b8"/><stop offset="1" stop-color="#8e8e8e"/></linearGradient>
<linearGradient id="bl13" x1="0" y1="0" x2="1" y2="0"><stop offset="0" stop-color="#b4b4b4"/><stop offset="1" stop-color="#989898"/></linearGradient>
<linearGradient id="br13" x1="0" y1="0" x2="1" y2="0"><stop offset="0" stop-color="#c8c8c8"/><stop offset="1" stop-color="#e6e6e6"/></linearGradient>
<linearGradient id="bb13" x1="0" y1="0" x2="0" y2="1"><stop offset="0" stop-color="#cacaca"/><stop offset="1" stop-color="#e4e4e4"/></linearGradient></defs>
<rect x="7" y="7" width="48" height="17" fill="#d8d8d8"/>
<polygon points="0,0 61,0 55,7 7,7" fill="url(#bt13)"/>
<polygon points="0,0 7,7 7,24 0,29" fill="url(#bl13)"/>
<polygon points="61,0 61,29 55,24 55,7" fill="url(#br13)"/>
<polygon points="0,29 61,29 55,24 7,24" fill="url(#bb13)"/>
</svg>
<div class="t" style="left:405.0px;width:200px;text-align:center;top:630.63px;font-size:11.66px;line-height:11.66px;color:#000;transform:scaleX(0.9346);transform-origin:50% 0;">0.54</div>
<div class="t" style="left:608.7px;top:556.71px;font-size:12.51px;line-height:12.51px;color:#000;transform:scaleX(0.9346);transform-origin:0 0;">Temperature (C)</div>
<svg class="r" style="left:622px;top:576px" width="54" height="24" viewBox="0 0 54 24">
<defs><linearGradient id="bt14" x1="0" y1="0" x2="0" y2="1"><stop offset="0" stop-color="#bcbcbc"/><stop offset="1" stop-color="#a4a4a4"/></linearGradient>
<linearGradient id="bl14" x1="0" y1="0" x2="1" y2="0"><stop offset="0" stop-color="#bcbcbc"/><stop offset="1" stop-color="#a8a8a8"/></linearGradient>
<linearGradient id="br14" x1="0" y1="0" x2="1" y2="0"><stop offset="0" stop-color="#d8d8d8"/><stop offset="1" stop-color="#e2e2e2"/></linearGradient>
<linearGradient id="bb14" x1="0" y1="0" x2="0" y2="1"><stop offset="0" stop-color="#dadada"/><stop offset="1" stop-color="#e4e4e4"/></linearGradient></defs>
<rect x="4" y="4" width="47" height="16" fill="#d8d8d8"/>
<polygon points="0,0 54,0 51,4 4,4" fill="url(#bt14)"/>
<polygon points="0,0 4,4 4,20 0,24" fill="url(#bl14)"/>
<polygon points="54,0 54,24 51,20 51,4" fill="url(#br14)"/>
<polygon points="0,24 54,24 51,20 4,20" fill="url(#bb14)"/>
</svg>
<div class="t" style="left:547.5px;width:200px;text-align:center;top:581.83px;font-size:11.66px;line-height:11.66px;color:#000;transform:scaleX(0.9346);transform-origin:50% 0;">454.1</div>
<div class="t" style="left:607.9px;top:606.33px;font-size:12.02px;line-height:12.02px;color:#000;transform:scaleX(0.9346);transform-origin:0 0;">Relative Error (%)</div>
<svg class="r" style="left:622px;top:624px" width="54" height="24" viewBox="0 0 54 24">
<defs><linearGradient id="bt15" x1="0" y1="0" x2="0" y2="1"><stop offset="0" stop-color="#bcbcbc"/><stop offset="1" stop-color="#a4a4a4"/></linearGradient>
<linearGradient id="bl15" x1="0" y1="0" x2="1" y2="0"><stop offset="0" stop-color="#bcbcbc"/><stop offset="1" stop-color="#a8a8a8"/></linearGradient>
<linearGradient id="br15" x1="0" y1="0" x2="1" y2="0"><stop offset="0" stop-color="#d8d8d8"/><stop offset="1" stop-color="#e2e2e2"/></linearGradient>
<linearGradient id="bb15" x1="0" y1="0" x2="0" y2="1"><stop offset="0" stop-color="#dadada"/><stop offset="1" stop-color="#e4e4e4"/></linearGradient></defs>
<rect x="4" y="4" width="47" height="16" fill="#d8d8d8"/>
<polygon points="0,0 54,0 51,4 4,4" fill="url(#bt15)"/>
<polygon points="0,0 4,4 4,20 0,24" fill="url(#bl15)"/>
<polygon points="54,0 54,24 51,20 51,4" fill="url(#br15)"/>
<polygon points="0,24 54,24 51,20 4,20" fill="url(#bb15)"/>
</svg>
<div class="t" style="left:547.5px;width:200px;text-align:center;top:630.23px;font-size:11.66px;line-height:11.66px;color:#000;transform:scaleX(0.9346);transform-origin:50% 0;">6.91</div>
</body></html>
